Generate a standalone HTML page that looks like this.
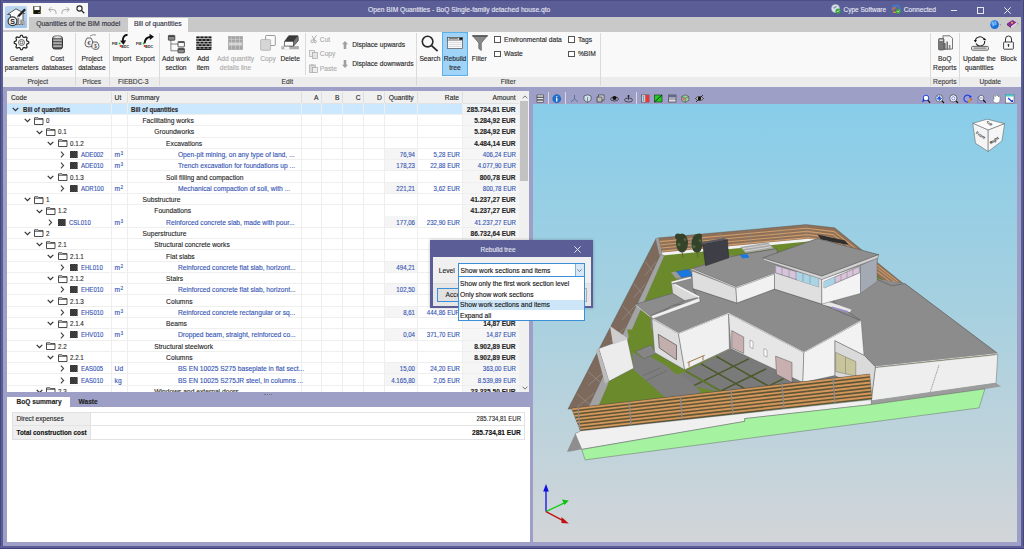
<!DOCTYPE html>
<html><head><meta charset="utf-8">
<style>
*{margin:0;padding:0;box-sizing:border-box}
html,body{width:1024px;height:549px;overflow:hidden}
body{position:relative;background:#9e9fc6;font-family:"Liberation Sans",sans-serif;font-size:6.7px;color:#2b2b2b}
.a{position:absolute}
.t{position:absolute;white-space:nowrap;line-height:1;-webkit-text-stroke:.12px currentColor}
.c{transform:translateX(-50%)}
.r{transform:translateX(-100%)}
svg{position:absolute;overflow:visible}
#title{left:0;top:0;width:1024px;height:17px;background:#5b5e96;border-top:1px solid #4b4e86}
#bl{left:0;top:0;width:3px;height:549px;background:#5b5e96;border-left:1px solid #44477c}
#br{left:1021px;top:0;width:3px;height:549px;background:#5b5e96;border-right:1px solid #44477c}
#bb{left:0;top:546px;width:1024px;height:3px;background:#5b5e96;border-bottom:1px solid #3f4278}
#tabs{left:3px;top:17px;width:1018px;height:14.5px;background:#c9c9c9}
#ribbon{left:3px;top:31.5px;width:1018px;height:55.3px;background:#f9f9f9}
#rlabels{left:3px;top:77.2px;width:1018px;height:9.6px;background:#ececec}
.sep{position:absolute;width:1px;background:#dadada}
.gl{top:77.6px;color:#3a3a3a}
.bl{color:#262626}
.dis{color:#ababab}
.row{position:absolute;left:0;width:512.1px;height:11.28px;border-bottom:1px solid #efefef}
.cell{position:absolute;top:0;height:100%;border-right:1px solid #ececec}
.tx{position:absolute;white-space:nowrap;line-height:1;top:2.6px}
.it{color:#3454b4}
.b{font-weight:bold}
</style></head><body>

<div class="a" id="title"></div>
<div class="a" id="tabs"></div>
<div class="a" id="ribbon"></div>
<div class="a" id="rlabels"></div>
<div class="t c" style="left:459.2px;top:7.0px;color:#e6e7f2">Open BIM Quantities - BoQ Single-family detached house.qto</div>
<svg style="left:831px;top:4px" width="10" height="10" viewBox="0 0 10 10">
<circle cx="4.5" cy="4.5" r="4" fill="#dfe6ee" stroke="#aab4c0" stroke-width=".6"/>
<path d="M2 3.5 Q4 1.5 6.5 2.5 Q5 4 3 5z" fill="#8fa0b0"/>
<circle cx="7" cy="7" r="2.6" fill="#3aa53a"/><path d="M5.8 7 l.9 .9 1.6-1.7" stroke="#fff" stroke-width=".7" fill="none"/></svg>
<div class="t " style="left:843.5px;top:7.4px;color:#e6e7f2;font-size:6.5px">Cype Software</div>
<svg style="left:891px;top:4px" width="10" height="10" viewBox="0 0 10 10">
<path d="M1 6 Q1 1.5 5 1.5 Q9 1.5 9 5.5" stroke="#3d7fd0" stroke-width="1.6" fill="none"/>
<path d="M1.5 6.5 Q3 3 5.5 4" stroke="#e07030" stroke-width="1.3" fill="none"/>
<path d="M2 8 Q5 9 8 7" stroke="#d6b020" stroke-width="1.3" fill="none"/>
<circle cx="7.2" cy="7.3" r="2.5" fill="#3aa53a"/><path d="M6 7.3 l.9 .9 1.6-1.7" stroke="#fff" stroke-width=".7" fill="none"/></svg>
<div class="t " style="left:903.7px;top:7.4px;color:#e6e7f2;font-size:6.7px">Connected</div>
<div class="a" style="left:950.5px;top:10px;width:6.5px;height:1px;background:#e8e8f2"></div>
<div class="a" style="left:977.4px;top:7px;width:6.5px;height:6.5px;border:1px solid #e8e8f2"></div>
<svg style="left:1004px;top:6.8px" width="7" height="7" viewBox="0 0 7 7"><path d="M0.3 .3L6.7 6.7M6.7 .3L.3 6.7" stroke="#eeeef6" stroke-width="1"/></svg>
<div class="a" style="left:3px;top:3px;width:26.3px;height:27px;background:#f4f4f4"></div>
<div class="a" style="left:5.3px;top:5.6px;width:22.2px;height:22.2px;background:linear-gradient(#c0d8f0,#9cc2ea);border-radius:1.5px"></div>
<svg style="left:5px;top:5px" width="22" height="22" viewBox="0 0 22 22">
<path d="M2.5 9.5 L11 3.8 L19.5 8.5 L18 8.5 L18 19.5 L5.5 19.5 L5.5 9.5z" fill="#fbfbfb" stroke="#4a4a4a" stroke-width=".9"/>
<path d="M12.5 10.5 L19.3 3.5 L21 5 L14.2 12z" fill="#222"/><path d="M12.5 10.5 L11.8 12.6 L14.2 12z" fill="#666"/>
<rect x="12.3" y="13" width="2" height="7" fill="#8a8a8a"/><rect x="15.2" y="14.5" width="2" height="5.5" fill="#9a9a9a"/><rect x="18" y="16" width="2" height="4" fill="#aaa"/>
<circle cx="7.5" cy="16.3" r="4.4" fill="#f0f0f0" stroke="#3a3a3a" stroke-width="1.2"/>
<text x="7.5" y="18.8" font-size="7" font-weight="bold" text-anchor="middle" fill="#1a1a1a" font-family="Liberation Sans">S</text></svg>
<div class="a" style="left:29.3px;top:3px;width:58.7px;height:14px;background:#f7f7f7"></div>
<svg style="left:33px;top:5.9px" width="8" height="8.2" viewBox="0 0 8 8.2">
<rect x=".2" y=".2" width="7.6" height="7.8" fill="#2a2a10" /><rect x="1.3" y=".6" width="5.2" height="3.4" fill="#fff"/><rect x=".6" y="4.6" width="6.8" height="3" fill="#111"/><rect x=".4" y="4.3" width=".6" height="3.5" fill="#8a8a20"/><rect x="7" y="4.3" width=".6" height="3.5" fill="#8a8a20"/><rect x="5.6" y="6.2" width="1" height="1" fill="#ccc"/></svg>
<svg style="left:47.5px;top:5.6px" width="9" height="9" viewBox="0 0 9 9"><path d="M3.2 1.2 L.8 3.6 L3.2 6" stroke="#a8a8a8" stroke-width="1" fill="none"/><path d="M1 3.6 H5 Q8 3.6 8 6.3 V8" stroke="#a8a8a8" stroke-width="1" fill="none"/></svg>
<svg style="left:61px;top:5.6px" width="9" height="9" viewBox="0 0 9 9"><path d="M5.8 1.2 L8.2 3.6 L5.8 6" stroke="#a8a8a8" stroke-width="1" fill="none"/><path d="M8 3.6 H4 Q1 3.6 1 6.3 V8" stroke="#a8a8a8" stroke-width="1" fill="none"/></svg>
<svg style="left:76px;top:5.2px" width="9" height="9" viewBox="0 0 9 9"><circle cx="3.5" cy="3.5" r="2.6" stroke="#222" stroke-width="1.1" fill="none"/><path d="M5.4 5.4 L8.3 8.3" stroke="#222" stroke-width="1.3"/></svg>
<div class="t " style="left:36.3px;top:21.1px;color:#2e2e3e;font-size:6.8px">Quantities of the BIM model</div>
<div class="a" style="left:128.1px;top:17.9px;width:59.7px;height:14px;background:#f9f9f9"></div>
<div class="t " style="left:134px;top:21.1px;color:#2e2e3e;font-size:6.8px">Bill of quantities</div>
<svg style="left:990px;top:19.5px" width="12" height="10" viewBox="0 0 12 10">
<circle cx="4.6" cy="4.6" r="4.3" fill="#1a6fd8"/><circle cx="3.6" cy="3.4" r="2.4" fill="#5fb0ff" opacity=".8"/><path d="M2.5 2.5 Q4 4 3 6.5 M5.5 1.2 Q6.5 3 6 5" stroke="#fff" stroke-width=".6" fill="none" opacity=".8"/>
<path d="M10 4.6 l1.2 0 -.6 .8z" fill="#555"/></svg>
<svg style="left:1006px;top:19px" width="14" height="10" viewBox="0 0 14 10">
<path d="M1 4.5 L6.5 1 L10.5 3.5 L5 7.5z" fill="#8a2a9a"/><path d="M1 4.5 L5 7.5 L5 9 L1 6z" fill="#5a1a6a"/><path d="M5 7.5 L10.5 3.5 L10.5 5 L5 9z" fill="#ddd"/><circle cx="6" cy="3.8" r="1" fill="#f0c020"/>
<path d="M11.3 4.6 l1.2 0 -.6 .8z" fill="#555"/></svg>
<div class="sep" style="left:75.2px;top:33px;height:53px"></div>
<div class="sep" style="left:108.6px;top:33px;height:53px"></div>
<div class="sep" style="left:158.6px;top:33px;height:53px"></div>
<div class="sep" style="left:416.4px;top:33px;height:53px"></div>
<div class="sep" style="left:599.5px;top:33px;height:53px"></div>
<div class="sep" style="left:930.3px;top:33px;height:53px"></div>
<div class="sep" style="left:959.3px;top:33px;height:53px"></div>
<div class="sep" style="left:304.5px;top:33px;height:42px"></div>
<div class="t c gl" style="left:37.8px;top:79.1px;">Project</div>
<div class="t c gl" style="left:91.8px;top:79.1px;">Prices</div>
<div class="t c gl" style="left:133.2px;top:79.1px;">FIEBDC-3</div>
<div class="t c gl" style="left:287.3px;top:79.1px;">Edit</div>
<div class="t c gl" style="left:508.2px;top:79.1px;">Filter</div>
<div class="t c gl" style="left:944.8px;top:79.1px;">Reports</div>
<div class="t c gl" style="left:990.3px;top:79.1px;">Update</div>
<div class="t c bl" style="left:21.7px;top:55.9px;">General</div>
<div class="t c bl" style="left:21.7px;top:64.5px;">parameters</div>
<div class="t c bl" style="left:57.2px;top:55.9px;">Cost</div>
<div class="t c bl" style="left:57.2px;top:64.5px;">databases</div>
<div class="t c bl" style="left:91.9px;top:55.9px;">Project</div>
<div class="t c bl" style="left:91.9px;top:64.5px;">database</div>
<div class="t c bl" style="left:121.9px;top:55.9px;">Import</div>
<div class="t c bl" style="left:145.3px;top:55.9px;">Export</div>
<div class="t c bl" style="left:176px;top:55.9px;">Add work</div>
<div class="t c bl" style="left:176px;top:64.5px;">section</div>
<div class="t c bl" style="left:203.1px;top:55.9px;">Add</div>
<div class="t c bl" style="left:203.1px;top:64.5px;">item</div>
<div class="t c dis" style="left:235.5px;top:55.9px;">Add quantity</div>
<div class="t c dis" style="left:235.5px;top:64.5px;">details line</div>
<div class="t c dis" style="left:268px;top:55.9px;">Copy</div>
<div class="t c bl" style="left:290.2px;top:55.9px;">Delete</div>
<div class="a" style="left:442.2px;top:32.3px;width:25.6px;height:43.4px;background:#9fd4f8;border:1px solid #5cb0ea"></div>
<div class="t c bl" style="left:430px;top:55.9px;">Search</div>
<div class="t c bl" style="left:455px;top:55.9px;">Rebuild</div>
<div class="t c bl" style="left:455px;top:64.5px;">tree</div>
<div class="t c bl" style="left:479.3px;top:55.9px;">Filter</div>
<div class="t c bl" style="left:944.8px;top:55.9px;">BoQ</div>
<div class="t c bl" style="left:944.8px;top:64.5px;">Reports</div>
<div class="t c bl" style="left:979.4px;top:55.9px;">Update the</div>
<div class="t c bl" style="left:979.4px;top:64.5px;">quantities</div>
<div class="t c bl" style="left:1008.6px;top:55.9px;">Block</div>
<div class="t dis" style="left:319.8px;top:36.6px;">Cut</div>
<div class="t dis" style="left:319.8px;top:51.2px;">Copy</div>
<div class="t dis" style="left:319.8px;top:65.7px;">Paste</div>
<div class="t bl" style="left:352.2px;top:41.5px;">Displace upwards</div>
<div class="t bl" style="left:352.2px;top:61.1px;">Displace downwards</div>
<div class="a" style="left:494.4px;top:36.2px;width:6.6px;height:6.6px;border:1px solid #555;background:#fff"></div>
<div class="t bl" style="left:504.09999999999997px;top:36.5px;">Environmental data</div>
<div class="a" style="left:494.4px;top:50.9px;width:6.6px;height:6.6px;border:1px solid #555;background:#fff"></div>
<div class="t bl" style="left:504.09999999999997px;top:51.199999999999996px;">Waste</div>
<div class="a" style="left:568.2px;top:36.2px;width:6.6px;height:6.6px;border:1px solid #555;background:#fff"></div>
<div class="t bl" style="left:577.9000000000001px;top:36.5px;">Tags</div>
<div class="a" style="left:568.2px;top:50.9px;width:6.6px;height:6.6px;border:1px solid #555;background:#fff"></div>
<div class="t bl" style="left:577.9000000000001px;top:51.199999999999996px;">%BIM</div>
<svg style="left:14px;top:35px" width="15" height="15" viewBox="0 0 15 15"><polygon points="14.76,6.77 14.77,8.20 12.86,9.12 12.44,10.13 13.15,12.12 12.14,13.13 10.15,12.43 9.14,12.86 8.23,14.76 6.80,14.77 5.88,12.86 4.87,12.44 2.88,13.15 1.87,12.14 2.57,10.15 2.14,9.14 0.24,8.23 0.23,6.80 2.14,5.88 2.56,4.87 1.85,2.88 2.86,1.87 4.85,2.57 5.86,2.14 6.77,0.24 8.20,0.23 9.12,2.14 10.13,2.56 12.12,1.85 13.13,2.86 12.43,4.85 12.86,5.86" fill="#fbfbfb" stroke="#1e1e1e" stroke-width="1.15" stroke-linejoin="round"/><circle cx="7.5" cy="7.5" r="3" fill="none" stroke="#3a3a3a" stroke-width=".8"/><circle cx="7.5" cy="7.5" r="1.4" fill="none" stroke="#444" stroke-width=".7"/></svg>
<svg style="left:52px;top:35px" width="11" height="15" viewBox="0 0 11 15">
<rect x=".5" y="1.5" width="10" height="12.5" rx="2.2" fill="#5a5a5a" stroke="#2a2a2a" stroke-width=".9"/>
<ellipse cx="5.5" cy="2.2" rx="4.6" ry="1.5" fill="#e0e0e0" stroke="#333" stroke-width=".6"/>
<rect x="1.2" y="4.6" width="8.6" height="1" fill="#e8e8e8"/><rect x="1.2" y="7.6" width="8.6" height="1" fill="#e8e8e8"/><rect x="1.2" y="10.6" width="8.6" height="1" fill="#e8e8e8"/></svg>
<svg style="left:83.5px;top:34px" width="16" height="16" viewBox="0 0 16 16">
<path d="M3 4 Q1 7 1 10 Q1 13 5 13 Q9 13 9 10 Q9 7 7 4z" fill="#f6f6f6" stroke="#444" stroke-width=".8"/>
<path d="M6 2 Q9 0 12 1" stroke="#444" stroke-width=".6" fill="none"/>
<text x="5" y="11" font-size="5.5" text-anchor="middle" fill="#333" font-family="Liberation Sans">€</text>
<path d="M9 8 Q7 11 8 13.5 Q9 15.5 12 15.5 Q15 15.5 15 12.5 Q15 10 13 8z" fill="#f0f0f0" stroke="#444" stroke-width=".8"/>
<text x="11.5" y="14" font-size="4.5" text-anchor="middle" fill="#333" font-family="Liberation Sans">$</text></svg>
<svg style="left:112.3px;top:33.8px" width="18" height="14" viewBox="0 0 18 14"><path d="M15.5 .8 Q10 1.5 11 8" stroke="#111" stroke-width="1.9" fill="none"/><path d="M8 6.8 L11.5 10.8 L14.2 6.2z" fill="#111"/>
<text x="0" y="10.6" font-size="4.2" font-weight="bold" fill="#1a1a1a" font-family="Liberation Sans" transform="scale(.85,1)">FIE</text>
<circle cx="7.6" cy="9.5" r="1" fill="#2c2"/><circle cx="8.6" cy="12" r="1" fill="#e22"/>
<text x="11" y="13.6" font-size="4.2" font-weight="bold" fill="#1a1a1a" font-family="Liberation Sans" transform="scale(.85,1)">BDC</text></svg>
<svg style="left:136.0px;top:33.8px" width="18" height="14" viewBox="0 0 18 14"><path d="M8.5 9.5 Q9 3.2 15 2.8" stroke="#111" stroke-width="1.9" fill="none"/><path d="M13.5 -.2 L18 2.8 L13.8 6z" fill="#111"/>
<text x="0" y="10.6" font-size="4.2" font-weight="bold" fill="#1a1a1a" font-family="Liberation Sans" transform="scale(.85,1)">FIE</text>
<circle cx="7.6" cy="9.5" r="1" fill="#2c2"/><circle cx="8.6" cy="12" r="1" fill="#e22"/>
<text x="11" y="13.6" font-size="4.2" font-weight="bold" fill="#1a1a1a" font-family="Liberation Sans" transform="scale(.85,1)">BDC</text></svg>
<svg style="left:167.5px;top:34.5px" width="17" height="17" viewBox="0 0 17 17">
<path d="M2.9 5.2 V9 H10 M2.9 9 V15.8 H10" stroke="#666" stroke-width=".8" fill="none"/>
<rect x=".4" y=".4" width="6.4" height="4.8" rx=".5" fill="#8a8a8a" stroke="#333" stroke-width=".8"/><rect x=".8" y=".8" width="5.6" height="1.2" fill="#444"/>
<rect x="10" y="6.5" width="6.4" height="5.4" rx=".5" fill="#fafafa" stroke="#333" stroke-width=".8"/><rect x="10.4" y="6.9" width="5.6" height="1.1" fill="#555"/>
<rect x="10" y="13.4" width="6.4" height="4.4" rx=".5" fill="#8f8f8f" stroke="#333" stroke-width=".8"/><rect x="10.4" y="13.8" width="5.6" height="1.1" fill="#444"/></svg>
<svg style="left:196px;top:36.4px" width="15.5" height="14" viewBox="0 0 15.5 14"><rect x="0.3" y="0.4" width="3.4" height="2" fill="#1a1a1a"/><rect x="4.3" y="0.4" width="3.4" height="2" fill="#1a1a1a"/><rect x="8.3" y="0.4" width="3.4" height="2" fill="#1a1a1a"/><rect x="12.3" y="0.4" width="3.2" height="2" fill="#1a1a1a"/><rect x="0.3" y="3.0" width="1.4" height="2" fill="#1a1a1a"/><rect x="2.3" y="3.0" width="3.4" height="2" fill="#1a1a1a"/><rect x="6.3" y="3.0" width="3.4" height="2" fill="#1a1a1a"/><rect x="10.3" y="3.0" width="3.4" height="2" fill="#1a1a1a"/><rect x="14.3" y="3.0" width="1.2" height="2" fill="#1a1a1a"/><rect x="0.3" y="5.6" width="3.4" height="2" fill="#1a1a1a"/><rect x="4.3" y="5.6" width="3.4" height="2" fill="#1a1a1a"/><rect x="8.3" y="5.6" width="3.4" height="2" fill="#1a1a1a"/><rect x="12.3" y="5.6" width="3.2" height="2" fill="#1a1a1a"/><rect x="0.3" y="8.2" width="1.4" height="2" fill="#1a1a1a"/><rect x="2.3" y="8.2" width="3.4" height="2" fill="#1a1a1a"/><rect x="6.3" y="8.2" width="3.4" height="2" fill="#1a1a1a"/><rect x="10.3" y="8.2" width="3.4" height="2" fill="#1a1a1a"/><rect x="14.3" y="8.2" width="1.2" height="2" fill="#1a1a1a"/><rect x="0.3" y="10.8" width="3.4" height="2" fill="#1a1a1a"/><rect x="4.3" y="10.8" width="3.4" height="2" fill="#1a1a1a"/><rect x="8.3" y="10.8" width="3.4" height="2" fill="#1a1a1a"/><rect x="12.3" y="10.8" width="3.2" height="2" fill="#1a1a1a"/><rect x=".3" y="13" width="15" height="1" fill="#222"/></svg>
<svg style="left:228px;top:36px" width="15" height="14" viewBox="0 0 15 14">
<rect x=".5" y=".5" width="14" height="13" fill="#a6a6a6" stroke="#999" stroke-width=".6"/>
<path d="M.5 3.5H14.5M.5 6.5H14.5M.5 9.5H14.5M3.5 .5V13.5M7.5 .5V13.5M11.5 .5V13.5" stroke="#d0d0d0" stroke-width=".6"/>
<rect x="1" y="7" width="13" height="2" fill="#eaeaea" opacity=".7"/></svg>
<svg style="left:260px;top:35px" width="16" height="16" viewBox="0 0 16 16">
<rect x="5.6" y=".5" width="9.7" height="10" rx=".8" fill="#fafafa" stroke="#8f8f8f" stroke-width=".9"/>
<rect x=".6" y="4.6" width="10" height="10.7" rx=".8" fill="#d6d6d6" stroke="#a8a8a8" stroke-width=".7"/></svg>
<svg style="left:281px;top:35px" width="19" height="15" viewBox="0 0 19 15">
<path d="M.3 11.1 H17.9 V14.3 H.3z" fill="#ababab"/><path d="M.3 11.1 H3.3 L.3 14.3z" fill="#c8c8c8"/><rect x="3.3" y="11.1" width="5" height="3.2" fill="#f9f9f9"/>
<path d="M7.8 .75 L16.7 .75 L12.5 6.4 L3.6 6.4z" fill="#3a3a3a"/>
<path d="M3.6 6.4 L12.5 6.4 L12.5 11.1 L3.3 11.1z" fill="#fbfbfb"/>
<path d="M12.5 6.4 L16.7 .75 L17.2 2 L17.2 5.8 L12.5 11.1z" fill="#777"/>
<path d="M7.8 .75 L16.7 .75 L17.2 2 L17.2 5.8 L12.5 11.1 L3.3 11.1 L3.6 6.4z M3.6 6.4 L12.5 6.4 L16.7 .75 M12.5 6.4 V11.1" fill="none" stroke="#333" stroke-width=".7" stroke-linejoin="round"/></svg>
<svg style="left:309.5px;top:35px" width="8" height="8" viewBox="0 0 8 8"><path d="M6.5 .3 L3 5 M2 .8 L5 5.5" stroke="#9a9a9a" stroke-width=".8"/><circle cx="2.2" cy="6.3" r="1.4" fill="none" stroke="#a0a0a0" stroke-width=".8"/><circle cx="5.2" cy="6.6" r="1.2" fill="none" stroke="#a0a0a0" stroke-width=".8"/></svg>
<svg style="left:308.5px;top:49.5px" width="9" height="9" viewBox="0 0 9 9"><rect x=".4" y=".4" width="5" height="6" fill="#eee" stroke="#aaa" stroke-width=".7"/><rect x="3.4" y="2.6" width="5" height="6" fill="#e4e4e4" stroke="#a5a5a5" stroke-width=".7"/></svg>
<svg style="left:308.5px;top:64px" width="9" height="9" viewBox="0 0 9 9"><rect x=".4" y="1" width="6" height="7.5" fill="#d9d9d9" stroke="#aaa" stroke-width=".7"/><rect x="2" y=".2" width="2.6" height="1.6" fill="#bbb"/><rect x="3.6" y="3.6" width="5" height="5" fill="#eee" stroke="#a5a5a5" stroke-width=".7"/></svg>
<svg style="left:342.2px;top:40.5px" width="6" height="8" viewBox="0 0 6 8"><path d="M3 0 L6 3.3 L4.3 3.3 L4.3 8 L1.7 8 L1.7 3.3 L0 3.3z" fill="#a0a0a0"/></svg>
<svg style="left:342.2px;top:60px" width="6" height="8" viewBox="0 0 6 8"><path d="M3 8 L6 4.7 L4.3 4.7 L4.3 0 L1.7 0 L1.7 4.7 L0 4.7z" fill="#a0a0a0"/></svg>
<svg style="left:420.5px;top:34.6px" width="18" height="17" viewBox="0 0 18 17"><circle cx="6.6" cy="6.6" r="5.3" stroke="#2a2a2a" stroke-width="1.6" fill="none"/><path d="M10.6 10.6 L16.6 16.2" stroke="#2a2a2a" stroke-width="1.8"/></svg>
<svg style="left:447px;top:36.5px" width="16" height="12" viewBox="0 0 16 12">
<rect x=".5" y=".5" width="15" height="11" fill="#fbfbfb" stroke="#555" stroke-width=".7"/>
<rect x=".5" y=".5" width="15" height="2.6" fill="#e6e6e6" stroke="#444" stroke-width=".6"/>
<rect x="2" y="1.3" width="9" height=".9" fill="#555"/><rect x="12.3" y=".8" width="3" height="2" fill="#111"/>
<path d="M1.5 5.5H14.5M1.5 7.5H14.5M1.5 9.5H14.5" stroke="#bbb" stroke-width=".5"/></svg>
<svg style="left:471.5px;top:35.2px" width="16" height="16" viewBox="0 0 16 16">
<path d="M.5 .6 H15.5 L9.3 8 L9.3 15.5 L6.8 13.5 L6.8 8z" fill="#8a8a8a" stroke="#444" stroke-width=".6"/><rect x=".5" y=".4" width="15" height="1.4" fill="#555"/></svg>
<svg style="left:937.5px;top:35px" width="15" height="16" viewBox="0 0 15 16">
<path d="M5 .8 H12 L14.5 3.3 V14 H5z" fill="#f6f6f6" stroke="#555" stroke-width=".8"/>
<rect x=".5" y="3.5" width="5.5" height="11.5" rx="1" fill="#777" stroke="#444" stroke-width=".6"/><rect x="1.5" y="4.5" width="3.5" height="1.5" fill="#ddd"/>
<rect x="6" y="8" width="1.6" height="7" fill="#666"/><rect x="8.4" y="6.5" width="1.6" height="8.5" fill="#777"/><rect x="10.8" y="10" width="1.6" height="5" fill="#888"/></svg>
<svg style="left:970.5px;top:34.8px" width="18" height="16" viewBox="0 0 18 16">
<path d="M4.5 6 A4.5 4 0 0 1 13 4" stroke="#222" stroke-width="1.1" fill="none"/><path d="M13.5 6 A4.5 4 0 0 1 5 8.5" stroke="#222" stroke-width="1.1" fill="none"/>
<path d="M2.7 5 L6 5.3 L4.4 7.4z" fill="#111"/><path d="M15.3 5.3 L12 5 L13.6 3z" fill="#111"/>
<rect x=".6" y="11.4" width="16.8" height="3.8" rx="1" fill="#eee" stroke="#555" stroke-width=".9"/><rect x="2.5" y="12.6" width="13" height="1" fill="#666"/></svg>
<svg style="left:1003.2px;top:35px" width="11" height="15" viewBox="0 0 11 15">
<path d="M2.5 7 V4 A3 3 0 0 1 8.5 4 V7" stroke="#333" stroke-width="1" fill="none"/>
<rect x=".6" y="7" width="9.8" height="7.2" rx=".8" fill="#fafafa" stroke="#333" stroke-width=".9"/>
<circle cx="5.5" cy="9.9" r=".9" fill="#222"/><rect x="5.1" y="10" width=".8" height="2" fill="#222"/></svg>
<div class="a" style="left:7px;top:91.3px;width:522.2px;height:300.8px;background:#fff;overflow:hidden">
<div class="a" style="left:0;top:0;width:512.1px;height:12.4px;background:#f0f0f0;border-bottom:1px solid #e2e2e2"></div>
<div class="a" style="left:104.3px;top:1px;width:1px;height:10.5px;background:#dedede"></div>
<div class="a" style="left:120.1px;top:1px;width:1px;height:10.5px;background:#dedede"></div>
<div class="a" style="left:293.9px;top:1px;width:1px;height:10.5px;background:#dedede"></div>
<div class="a" style="left:313.9px;top:1px;width:1px;height:10.5px;background:#dedede"></div>
<div class="a" style="left:335.0px;top:1px;width:1px;height:10.5px;background:#dedede"></div>
<div class="a" style="left:356.1px;top:1px;width:1px;height:10.5px;background:#dedede"></div>
<div class="a" style="left:377.3px;top:1px;width:1px;height:10.5px;background:#dedede"></div>
<div class="a" style="left:409.6px;top:1px;width:1px;height:10.5px;background:#dedede"></div>
<div class="a" style="left:455.1px;top:1px;width:1px;height:10.5px;background:#dedede"></div>
<div class="t bl" style="left:4.0px;top:3.8px;">Code</div>
<div class="t bl" style="left:107.6px;top:3.8px;">Ut</div>
<div class="t bl" style="left:123.69999999999999px;top:3.8px;">Summary</div>
<div class="t r bl" style="left:311.4px;top:3.8px;">A</div>
<div class="t r bl" style="left:332.5px;top:3.8px;">B</div>
<div class="t r bl" style="left:353.6px;top:3.8px;">C</div>
<div class="t r bl" style="left:374.8px;top:3.8px;">D</div>
<div class="t bl" style="left:381.8px;top:3.8px;">Quantity</div>
<div class="t r bl" style="left:452.0px;top:3.8px;">Rate</div>
<div class="t r bl" style="left:508.6px;top:3.8px;">Amount</div>
<div class="a" style="left:0;top:12.40px;width:512.1px;height:11.28px;background:#cce8ff"></div>
<div class="a" style="left:455.6px;top:12.40px;width:56.5px;height:11.28px;background:#eef3f8"></div>
<div class="a" style="left:0;top:22.70px;width:512.1px;height:1px;background:#efefef"></div>
<div class="a" style="left:0;top:23.68px;width:512.1px;height:11.28px;background:#fff"></div>
<div class="a" style="left:455.6px;top:23.68px;width:56.5px;height:11.28px;background:#f6f6f6"></div>
<div class="a" style="left:0;top:33.70px;width:512.1px;height:1px;background:#efefef"></div>
<div class="a" style="left:0;top:34.96px;width:512.1px;height:11.28px;background:#fff"></div>
<div class="a" style="left:455.6px;top:34.96px;width:56.5px;height:11.28px;background:#f6f6f6"></div>
<div class="a" style="left:0;top:45.70px;width:512.1px;height:1px;background:#efefef"></div>
<div class="a" style="left:0;top:46.24px;width:512.1px;height:11.28px;background:#fff"></div>
<div class="a" style="left:455.6px;top:46.24px;width:56.5px;height:11.28px;background:#f6f6f6"></div>
<div class="a" style="left:0;top:56.70px;width:512.1px;height:1px;background:#efefef"></div>
<div class="a" style="left:0;top:57.52px;width:512.1px;height:11.28px;background:#fff"></div>
<div class="a" style="left:455.6px;top:57.52px;width:56.5px;height:11.28px;background:#f6f6f6"></div>
<div class="a" style="left:377.8px;top:57.52px;width:32.30000000000001px;height:11.28px;background:#f5f5f5"></div>
<div class="a" style="left:0;top:67.70px;width:512.1px;height:1px;background:#efefef"></div>
<div class="a" style="left:0;top:68.80px;width:512.1px;height:11.28px;background:#fff"></div>
<div class="a" style="left:455.6px;top:68.80px;width:56.5px;height:11.28px;background:#f6f6f6"></div>
<div class="a" style="left:377.8px;top:68.80px;width:32.30000000000001px;height:11.28px;background:#f5f5f5"></div>
<div class="a" style="left:0;top:78.70px;width:512.1px;height:1px;background:#efefef"></div>
<div class="a" style="left:0;top:80.08px;width:512.1px;height:11.28px;background:#fff"></div>
<div class="a" style="left:455.6px;top:80.08px;width:56.5px;height:11.28px;background:#f6f6f6"></div>
<div class="a" style="left:0;top:90.70px;width:512.1px;height:1px;background:#efefef"></div>
<div class="a" style="left:0;top:91.36px;width:512.1px;height:11.28px;background:#fff"></div>
<div class="a" style="left:455.6px;top:91.36px;width:56.5px;height:11.28px;background:#f6f6f6"></div>
<div class="a" style="left:377.8px;top:91.36px;width:32.30000000000001px;height:11.28px;background:#f5f5f5"></div>
<div class="a" style="left:0;top:101.70px;width:512.1px;height:1px;background:#efefef"></div>
<div class="a" style="left:0;top:102.64px;width:512.1px;height:11.28px;background:#fff"></div>
<div class="a" style="left:455.6px;top:102.64px;width:56.5px;height:11.28px;background:#f6f6f6"></div>
<div class="a" style="left:0;top:112.70px;width:512.1px;height:1px;background:#efefef"></div>
<div class="a" style="left:0;top:113.92px;width:512.1px;height:11.28px;background:#fff"></div>
<div class="a" style="left:455.6px;top:113.92px;width:56.5px;height:11.28px;background:#f6f6f6"></div>
<div class="a" style="left:0;top:124.70px;width:512.1px;height:1px;background:#efefef"></div>
<div class="a" style="left:0;top:125.20px;width:512.1px;height:11.28px;background:#fff"></div>
<div class="a" style="left:455.6px;top:125.20px;width:56.5px;height:11.28px;background:#f6f6f6"></div>
<div class="a" style="left:377.8px;top:125.20px;width:32.30000000000001px;height:11.28px;background:#f5f5f5"></div>
<div class="a" style="left:0;top:135.70px;width:512.1px;height:1px;background:#efefef"></div>
<div class="a" style="left:0;top:136.48px;width:512.1px;height:11.28px;background:#fff"></div>
<div class="a" style="left:455.6px;top:136.48px;width:56.5px;height:11.28px;background:#f6f6f6"></div>
<div class="a" style="left:0;top:146.70px;width:512.1px;height:1px;background:#efefef"></div>
<div class="a" style="left:0;top:147.76px;width:512.1px;height:11.28px;background:#fff"></div>
<div class="a" style="left:455.6px;top:147.76px;width:56.5px;height:11.28px;background:#f6f6f6"></div>
<div class="a" style="left:0;top:157.70px;width:512.1px;height:1px;background:#efefef"></div>
<div class="a" style="left:0;top:159.04px;width:512.1px;height:11.28px;background:#fff"></div>
<div class="a" style="left:455.6px;top:159.04px;width:56.5px;height:11.28px;background:#f6f6f6"></div>
<div class="a" style="left:0;top:169.70px;width:512.1px;height:1px;background:#efefef"></div>
<div class="a" style="left:0;top:170.32px;width:512.1px;height:11.28px;background:#fff"></div>
<div class="a" style="left:455.6px;top:170.32px;width:56.5px;height:11.28px;background:#f6f6f6"></div>
<div class="a" style="left:377.8px;top:170.32px;width:32.30000000000001px;height:11.28px;background:#f5f5f5"></div>
<div class="a" style="left:0;top:180.70px;width:512.1px;height:1px;background:#efefef"></div>
<div class="a" style="left:0;top:181.60px;width:512.1px;height:11.28px;background:#fff"></div>
<div class="a" style="left:455.6px;top:181.60px;width:56.5px;height:11.28px;background:#f6f6f6"></div>
<div class="a" style="left:0;top:191.70px;width:512.1px;height:1px;background:#efefef"></div>
<div class="a" style="left:0;top:192.88px;width:512.1px;height:11.28px;background:#fff"></div>
<div class="a" style="left:455.6px;top:192.88px;width:56.5px;height:11.28px;background:#f6f6f6"></div>
<div class="a" style="left:377.8px;top:192.88px;width:32.30000000000001px;height:11.28px;background:#f5f5f5"></div>
<div class="a" style="left:0;top:202.70px;width:512.1px;height:1px;background:#efefef"></div>
<div class="a" style="left:0;top:204.16px;width:512.1px;height:11.28px;background:#fff"></div>
<div class="a" style="left:455.6px;top:204.16px;width:56.5px;height:11.28px;background:#f6f6f6"></div>
<div class="a" style="left:0;top:214.70px;width:512.1px;height:1px;background:#efefef"></div>
<div class="a" style="left:0;top:215.44px;width:512.1px;height:11.28px;background:#fff"></div>
<div class="a" style="left:455.6px;top:215.44px;width:56.5px;height:11.28px;background:#f6f6f6"></div>
<div class="a" style="left:377.8px;top:215.44px;width:32.30000000000001px;height:11.28px;background:#f5f5f5"></div>
<div class="a" style="left:0;top:225.70px;width:512.1px;height:1px;background:#efefef"></div>
<div class="a" style="left:0;top:226.72px;width:512.1px;height:11.28px;background:#fff"></div>
<div class="a" style="left:455.6px;top:226.72px;width:56.5px;height:11.28px;background:#f6f6f6"></div>
<div class="a" style="left:0;top:236.70px;width:512.1px;height:1px;background:#efefef"></div>
<div class="a" style="left:0;top:238.00px;width:512.1px;height:11.28px;background:#fff"></div>
<div class="a" style="left:455.6px;top:238.00px;width:56.5px;height:11.28px;background:#f6f6f6"></div>
<div class="a" style="left:377.8px;top:238.00px;width:32.30000000000001px;height:11.28px;background:#f5f5f5"></div>
<div class="a" style="left:0;top:248.70px;width:512.1px;height:1px;background:#efefef"></div>
<div class="a" style="left:0;top:249.28px;width:512.1px;height:11.28px;background:#fff"></div>
<div class="a" style="left:455.6px;top:249.28px;width:56.5px;height:11.28px;background:#f6f6f6"></div>
<div class="a" style="left:0;top:259.70px;width:512.1px;height:1px;background:#efefef"></div>
<div class="a" style="left:0;top:260.56px;width:512.1px;height:11.28px;background:#fff"></div>
<div class="a" style="left:455.6px;top:260.56px;width:56.5px;height:11.28px;background:#f6f6f6"></div>
<div class="a" style="left:0;top:270.70px;width:512.1px;height:1px;background:#efefef"></div>
<div class="a" style="left:0;top:271.84px;width:512.1px;height:11.28px;background:#fff"></div>
<div class="a" style="left:455.6px;top:271.84px;width:56.5px;height:11.28px;background:#f6f6f6"></div>
<div class="a" style="left:377.8px;top:271.84px;width:32.30000000000001px;height:11.28px;background:#f5f5f5"></div>
<div class="a" style="left:0;top:281.70px;width:512.1px;height:1px;background:#efefef"></div>
<div class="a" style="left:0;top:283.12px;width:512.1px;height:11.28px;background:#fff"></div>
<div class="a" style="left:455.6px;top:283.12px;width:56.5px;height:11.28px;background:#f6f6f6"></div>
<div class="a" style="left:377.8px;top:283.12px;width:32.30000000000001px;height:11.28px;background:#f5f5f5"></div>
<div class="a" style="left:0;top:293.70px;width:512.1px;height:1px;background:#efefef"></div>
<div class="a" style="left:0;top:294.40px;width:512.1px;height:11.28px;background:#fff"></div>
<div class="a" style="left:455.6px;top:294.40px;width:56.5px;height:11.28px;background:#f6f6f6"></div>
<div class="a" style="left:0;top:304.70px;width:512.1px;height:1px;background:#efefef"></div>
<div class="a" style="left:104.3px;top:12.1px;width:.8px;height:300px;background:#eeeeee"></div>
<div class="a" style="left:120.1px;top:12.1px;width:.8px;height:300px;background:#eeeeee"></div>
<div class="a" style="left:293.9px;top:12.1px;width:.8px;height:300px;background:#eeeeee"></div>
<div class="a" style="left:313.9px;top:12.1px;width:.8px;height:300px;background:#eeeeee"></div>
<div class="a" style="left:335.0px;top:12.1px;width:.8px;height:300px;background:#eeeeee"></div>
<div class="a" style="left:356.1px;top:12.1px;width:.8px;height:300px;background:#eeeeee"></div>
<div class="a" style="left:377.3px;top:12.1px;width:.8px;height:300px;background:#eeeeee"></div>
<div class="a" style="left:409.6px;top:12.1px;width:.8px;height:300px;background:#eeeeee"></div>
<div class="a" style="left:455.1px;top:12.1px;width:.8px;height:300px;background:#eeeeee"></div>
<svg style="left:4.8999999999999995px;top:15.800000000000006px" width="7" height="5" viewBox="0 0 7 5"><path d="M.7 .9 L3.5 3.7 L6.3 .9" stroke="#333" stroke-width="1.25" fill="none"/></svg>
<div class="t b bl" style="left:15.7px;top:15.600000000000005px;font-size:6.6px;transform:scaleX(.92);transform-origin:0 50%">Bill of quantities</div>
<div class="t b bl" style="left:123.69999999999999px;top:15.600000000000005px;font-size:6.6px;transform:scaleX(.92);transform-origin:0 50%">Bill of quantities</div>
<div class="t r b bl" style="left:508.6px;top:15.600000000000005px;font-size:6.6px">285.734,81 EUR</div>
<svg style="left:16.7px;top:27.080000000000005px" width="7" height="5" viewBox="0 0 7 5"><path d="M.7 .9 L3.5 3.7 L6.3 .9" stroke="#333" stroke-width="1.25" fill="none"/></svg>
<svg style="left:27.2px;top:25.380000000000006px" width="9.5" height="8" viewBox="0 0 9.5 8"><path d="M.5 .8 H4 L4.6 1.6 H9 V7.5 H.5z" fill="#fff" stroke="#3a3a3a" stroke-width=".9"/><path d="M.5 2.3 H9" stroke="#3a3a3a" stroke-width=".8"/></svg>
<div class="t bl" style="left:39.099999999999994px;top:26.880000000000006px;transform:scaleX(.93);transform-origin:0 50%">0</div>
<div class="t bl" style="left:135.5px;top:26.880000000000006px;">Facilitating works</div>
<div class="t r b bl" style="left:508.6px;top:26.880000000000006px;font-size:6.6px">5.284,92 EUR</div>
<svg style="left:28.500000000000004px;top:38.36000000000001px" width="7" height="5" viewBox="0 0 7 5"><path d="M.7 .9 L3.5 3.7 L6.3 .9" stroke="#333" stroke-width="1.25" fill="none"/></svg>
<svg style="left:39.0px;top:36.66000000000001px" width="9.5" height="8" viewBox="0 0 9.5 8"><path d="M.5 .8 H4 L4.6 1.6 H9 V7.5 H.5z" fill="#fff" stroke="#3a3a3a" stroke-width=".9"/><path d="M.5 2.3 H9" stroke="#3a3a3a" stroke-width=".8"/></svg>
<div class="t bl" style="left:50.900000000000006px;top:38.16000000000001px;transform:scaleX(.93);transform-origin:0 50%">0.1</div>
<div class="t bl" style="left:147.29999999999998px;top:38.16000000000001px;">Groundworks</div>
<div class="t r b bl" style="left:508.6px;top:38.16000000000001px;font-size:6.6px">5.284,92 EUR</div>
<svg style="left:40.300000000000004px;top:49.63999999999999px" width="7" height="5" viewBox="0 0 7 5"><path d="M.7 .9 L3.5 3.7 L6.3 .9" stroke="#333" stroke-width="1.25" fill="none"/></svg>
<svg style="left:50.80000000000001px;top:47.94px" width="9.5" height="8" viewBox="0 0 9.5 8"><path d="M.5 .8 H4 L4.6 1.6 H9 V7.5 H.5z" fill="#fff" stroke="#3a3a3a" stroke-width=".9"/><path d="M.5 2.3 H9" stroke="#3a3a3a" stroke-width=".8"/></svg>
<div class="t bl" style="left:62.7px;top:49.44px;transform:scaleX(.93);transform-origin:0 50%">0.1.2</div>
<div class="t bl" style="left:159.1px;top:49.44px;">Excavations</div>
<div class="t r b bl" style="left:508.6px;top:49.44px;font-size:6.6px">4.484,14 EUR</div>
<svg style="left:52.6px;top:59.81999999999999px" width="5" height="7" viewBox="0 0 5 7"><path d="M.9 .7 L3.6 3.5 L.9 6.3" stroke="#444" stroke-width="1.1" fill="none"/></svg>
<svg style="left:63.2px;top:59.72px" width="7.5" height="7" viewBox="0 0 7.5 7"><rect x="0" y="0" width="7.5" height="7" fill="#262626"/><rect x="0.00" y="0.00" width="1.25" height="1.17" fill="#555"/><rect x="0.00" y="2.34" width="1.25" height="1.17" fill="#555"/><rect x="0.00" y="4.68" width="1.25" height="1.17" fill="#555"/><rect x="1.25" y="1.17" width="1.25" height="1.17" fill="#555"/><rect x="1.25" y="3.51" width="1.25" height="1.17" fill="#555"/><rect x="1.25" y="5.85" width="1.25" height="1.17" fill="#555"/><rect x="2.50" y="0.00" width="1.25" height="1.17" fill="#555"/><rect x="2.50" y="2.34" width="1.25" height="1.17" fill="#555"/><rect x="2.50" y="4.68" width="1.25" height="1.17" fill="#555"/><rect x="3.75" y="1.17" width="1.25" height="1.17" fill="#555"/><rect x="3.75" y="3.51" width="1.25" height="1.17" fill="#555"/><rect x="3.75" y="5.85" width="1.25" height="1.17" fill="#555"/><rect x="5.00" y="0.00" width="1.25" height="1.17" fill="#555"/><rect x="5.00" y="2.34" width="1.25" height="1.17" fill="#555"/><rect x="5.00" y="4.68" width="1.25" height="1.17" fill="#555"/><rect x="6.25" y="1.17" width="1.25" height="1.17" fill="#555"/><rect x="6.25" y="3.51" width="1.25" height="1.17" fill="#555"/><rect x="6.25" y="5.85" width="1.25" height="1.17" fill="#555"/></svg>
<div class="t it" style="left:74.0px;top:60.72px;transform:scaleX(.9);transform-origin:0 50%">ADE002</div>
<div class="t it" style="left:107.6px;top:60.72px;">m<span style="font-size:4.6px;position:relative;top:-2.2px;margin-left:.4px">3</span></div>
<div class="t it" style="left:170.89999999999998px;top:60.72px;">Open-pit mining, on any type of land, ...</div>
<div class="t it" style="left:408.3px;top:60.72px;transform:translateX(-100%) scaleX(.91);transform-origin:100% 50%">76,94</div>
<div class="t it" style="left:452.8px;top:60.72px;transform:translateX(-100%) scaleX(.91);transform-origin:100% 50%">5,28 EUR</div>
<div class="t it" style="left:508.6px;top:60.72px;transform:translateX(-100%) scaleX(.91);transform-origin:100% 50%">406,24 EUR</div>
<svg style="left:52.6px;top:71.1px" width="5" height="7" viewBox="0 0 5 7"><path d="M.9 .7 L3.6 3.5 L.9 6.3" stroke="#444" stroke-width="1.1" fill="none"/></svg>
<svg style="left:63.2px;top:71.0px" width="7.5" height="7" viewBox="0 0 7.5 7"><rect x="0" y="0" width="7.5" height="7" fill="#262626"/><rect x="0.00" y="0.00" width="1.25" height="1.17" fill="#555"/><rect x="0.00" y="2.34" width="1.25" height="1.17" fill="#555"/><rect x="0.00" y="4.68" width="1.25" height="1.17" fill="#555"/><rect x="1.25" y="1.17" width="1.25" height="1.17" fill="#555"/><rect x="1.25" y="3.51" width="1.25" height="1.17" fill="#555"/><rect x="1.25" y="5.85" width="1.25" height="1.17" fill="#555"/><rect x="2.50" y="0.00" width="1.25" height="1.17" fill="#555"/><rect x="2.50" y="2.34" width="1.25" height="1.17" fill="#555"/><rect x="2.50" y="4.68" width="1.25" height="1.17" fill="#555"/><rect x="3.75" y="1.17" width="1.25" height="1.17" fill="#555"/><rect x="3.75" y="3.51" width="1.25" height="1.17" fill="#555"/><rect x="3.75" y="5.85" width="1.25" height="1.17" fill="#555"/><rect x="5.00" y="0.00" width="1.25" height="1.17" fill="#555"/><rect x="5.00" y="2.34" width="1.25" height="1.17" fill="#555"/><rect x="5.00" y="4.68" width="1.25" height="1.17" fill="#555"/><rect x="6.25" y="1.17" width="1.25" height="1.17" fill="#555"/><rect x="6.25" y="3.51" width="1.25" height="1.17" fill="#555"/><rect x="6.25" y="5.85" width="1.25" height="1.17" fill="#555"/></svg>
<div class="t it" style="left:74.0px;top:72.0px;transform:scaleX(.9);transform-origin:0 50%">ADE010</div>
<div class="t it" style="left:107.6px;top:72.0px;">m<span style="font-size:4.6px;position:relative;top:-2.2px;margin-left:.4px">3</span></div>
<div class="t it" style="left:170.89999999999998px;top:72.0px;">Trench excavation for foundations up ...</div>
<div class="t it" style="left:408.3px;top:72.0px;transform:translateX(-100%) scaleX(.91);transform-origin:100% 50%">178,23</div>
<div class="t it" style="left:452.8px;top:72.0px;transform:translateX(-100%) scaleX(.91);transform-origin:100% 50%">22,88 EUR</div>
<div class="t it" style="left:508.6px;top:72.0px;transform:translateX(-100%) scaleX(.91);transform-origin:100% 50%">4.077,90 EUR</div>
<svg style="left:40.300000000000004px;top:83.48px" width="7" height="5" viewBox="0 0 7 5"><path d="M.7 .9 L3.5 3.7 L6.3 .9" stroke="#333" stroke-width="1.25" fill="none"/></svg>
<svg style="left:50.80000000000001px;top:81.78px" width="9.5" height="8" viewBox="0 0 9.5 8"><path d="M.5 .8 H4 L4.6 1.6 H9 V7.5 H.5z" fill="#fff" stroke="#3a3a3a" stroke-width=".9"/><path d="M.5 2.3 H9" stroke="#3a3a3a" stroke-width=".8"/></svg>
<div class="t bl" style="left:62.7px;top:83.28px;transform:scaleX(.93);transform-origin:0 50%">0.1.3</div>
<div class="t bl" style="left:159.1px;top:83.28px;">Soil filling and compaction</div>
<div class="t r b bl" style="left:508.6px;top:83.28px;font-size:6.6px">800,78 EUR</div>
<svg style="left:52.6px;top:93.66px" width="5" height="7" viewBox="0 0 5 7"><path d="M.9 .7 L3.6 3.5 L.9 6.3" stroke="#444" stroke-width="1.1" fill="none"/></svg>
<svg style="left:63.2px;top:93.56px" width="7.5" height="7" viewBox="0 0 7.5 7"><rect x="0" y="0" width="7.5" height="7" fill="#262626"/><rect x="0.00" y="0.00" width="1.25" height="1.17" fill="#555"/><rect x="0.00" y="2.34" width="1.25" height="1.17" fill="#555"/><rect x="0.00" y="4.68" width="1.25" height="1.17" fill="#555"/><rect x="1.25" y="1.17" width="1.25" height="1.17" fill="#555"/><rect x="1.25" y="3.51" width="1.25" height="1.17" fill="#555"/><rect x="1.25" y="5.85" width="1.25" height="1.17" fill="#555"/><rect x="2.50" y="0.00" width="1.25" height="1.17" fill="#555"/><rect x="2.50" y="2.34" width="1.25" height="1.17" fill="#555"/><rect x="2.50" y="4.68" width="1.25" height="1.17" fill="#555"/><rect x="3.75" y="1.17" width="1.25" height="1.17" fill="#555"/><rect x="3.75" y="3.51" width="1.25" height="1.17" fill="#555"/><rect x="3.75" y="5.85" width="1.25" height="1.17" fill="#555"/><rect x="5.00" y="0.00" width="1.25" height="1.17" fill="#555"/><rect x="5.00" y="2.34" width="1.25" height="1.17" fill="#555"/><rect x="5.00" y="4.68" width="1.25" height="1.17" fill="#555"/><rect x="6.25" y="1.17" width="1.25" height="1.17" fill="#555"/><rect x="6.25" y="3.51" width="1.25" height="1.17" fill="#555"/><rect x="6.25" y="5.85" width="1.25" height="1.17" fill="#555"/></svg>
<div class="t it" style="left:74.0px;top:94.56px;transform:scaleX(.9);transform-origin:0 50%">ADR100</div>
<div class="t it" style="left:107.6px;top:94.56px;">m<span style="font-size:4.6px;position:relative;top:-2.2px;margin-left:.4px">2</span></div>
<div class="t it" style="left:170.89999999999998px;top:94.56px;">Mechanical compaction of soil, with ...</div>
<div class="t it" style="left:408.3px;top:94.56px;transform:translateX(-100%) scaleX(.91);transform-origin:100% 50%">221,21</div>
<div class="t it" style="left:452.8px;top:94.56px;transform:translateX(-100%) scaleX(.91);transform-origin:100% 50%">3,62 EUR</div>
<div class="t it" style="left:508.6px;top:94.56px;transform:translateX(-100%) scaleX(.91);transform-origin:100% 50%">800,78 EUR</div>
<svg style="left:16.7px;top:106.04px" width="7" height="5" viewBox="0 0 7 5"><path d="M.7 .9 L3.5 3.7 L6.3 .9" stroke="#333" stroke-width="1.25" fill="none"/></svg>
<svg style="left:27.2px;top:104.34px" width="9.5" height="8" viewBox="0 0 9.5 8"><path d="M.5 .8 H4 L4.6 1.6 H9 V7.5 H.5z" fill="#fff" stroke="#3a3a3a" stroke-width=".9"/><path d="M.5 2.3 H9" stroke="#3a3a3a" stroke-width=".8"/></svg>
<div class="t bl" style="left:39.099999999999994px;top:105.84px;transform:scaleX(.93);transform-origin:0 50%">1</div>
<div class="t bl" style="left:135.5px;top:105.84px;">Substructure</div>
<div class="t r b bl" style="left:508.6px;top:105.84px;font-size:6.6px">41.237,27 EUR</div>
<svg style="left:28.500000000000004px;top:117.32000000000001px" width="7" height="5" viewBox="0 0 7 5"><path d="M.7 .9 L3.5 3.7 L6.3 .9" stroke="#333" stroke-width="1.25" fill="none"/></svg>
<svg style="left:39.0px;top:115.62px" width="9.5" height="8" viewBox="0 0 9.5 8"><path d="M.5 .8 H4 L4.6 1.6 H9 V7.5 H.5z" fill="#fff" stroke="#3a3a3a" stroke-width=".9"/><path d="M.5 2.3 H9" stroke="#3a3a3a" stroke-width=".8"/></svg>
<div class="t bl" style="left:50.900000000000006px;top:117.12px;transform:scaleX(.93);transform-origin:0 50%">1.2</div>
<div class="t bl" style="left:147.29999999999998px;top:117.12px;">Foundations</div>
<div class="t r b bl" style="left:508.6px;top:117.12px;font-size:6.6px">41.237,27 EUR</div>
<svg style="left:40.800000000000004px;top:127.5px" width="5" height="7" viewBox="0 0 5 7"><path d="M.9 .7 L3.6 3.5 L.9 6.3" stroke="#444" stroke-width="1.1" fill="none"/></svg>
<svg style="left:51.400000000000006px;top:127.4px" width="7.5" height="7" viewBox="0 0 7.5 7"><rect x="0" y="0" width="7.5" height="7" fill="#262626"/><rect x="0.00" y="0.00" width="1.25" height="1.17" fill="#555"/><rect x="0.00" y="2.34" width="1.25" height="1.17" fill="#555"/><rect x="0.00" y="4.68" width="1.25" height="1.17" fill="#555"/><rect x="1.25" y="1.17" width="1.25" height="1.17" fill="#555"/><rect x="1.25" y="3.51" width="1.25" height="1.17" fill="#555"/><rect x="1.25" y="5.85" width="1.25" height="1.17" fill="#555"/><rect x="2.50" y="0.00" width="1.25" height="1.17" fill="#555"/><rect x="2.50" y="2.34" width="1.25" height="1.17" fill="#555"/><rect x="2.50" y="4.68" width="1.25" height="1.17" fill="#555"/><rect x="3.75" y="1.17" width="1.25" height="1.17" fill="#555"/><rect x="3.75" y="3.51" width="1.25" height="1.17" fill="#555"/><rect x="3.75" y="5.85" width="1.25" height="1.17" fill="#555"/><rect x="5.00" y="0.00" width="1.25" height="1.17" fill="#555"/><rect x="5.00" y="2.34" width="1.25" height="1.17" fill="#555"/><rect x="5.00" y="4.68" width="1.25" height="1.17" fill="#555"/><rect x="6.25" y="1.17" width="1.25" height="1.17" fill="#555"/><rect x="6.25" y="3.51" width="1.25" height="1.17" fill="#555"/><rect x="6.25" y="5.85" width="1.25" height="1.17" fill="#555"/></svg>
<div class="t it" style="left:62.2px;top:128.4px;transform:scaleX(.9);transform-origin:0 50%">CSL010</div>
<div class="t it" style="left:107.6px;top:128.4px;">m<span style="font-size:4.6px;position:relative;top:-2.2px;margin-left:.4px">3</span></div>
<div class="t it" style="left:159.1px;top:128.4px;">Reinforced concrete slab, made with pour...</div>
<div class="t it" style="left:408.3px;top:128.4px;transform:translateX(-100%) scaleX(.91);transform-origin:100% 50%">177,06</div>
<div class="t it" style="left:452.8px;top:128.4px;transform:translateX(-100%) scaleX(.91);transform-origin:100% 50%">232,90 EUR</div>
<div class="t it" style="left:508.6px;top:128.4px;transform:translateX(-100%) scaleX(.91);transform-origin:100% 50%">41.237,27 EUR</div>
<svg style="left:16.7px;top:139.88000000000002px" width="7" height="5" viewBox="0 0 7 5"><path d="M.7 .9 L3.5 3.7 L6.3 .9" stroke="#333" stroke-width="1.25" fill="none"/></svg>
<svg style="left:27.2px;top:138.18px" width="9.5" height="8" viewBox="0 0 9.5 8"><path d="M.5 .8 H4 L4.6 1.6 H9 V7.5 H.5z" fill="#fff" stroke="#3a3a3a" stroke-width=".9"/><path d="M.5 2.3 H9" stroke="#3a3a3a" stroke-width=".8"/></svg>
<div class="t bl" style="left:39.099999999999994px;top:139.68px;transform:scaleX(.93);transform-origin:0 50%">2</div>
<div class="t bl" style="left:135.5px;top:139.68px;">Superstructure</div>
<div class="t r b bl" style="left:508.6px;top:139.68px;font-size:6.6px">86.732,64 EUR</div>
<svg style="left:28.500000000000004px;top:151.16px" width="7" height="5" viewBox="0 0 7 5"><path d="M.7 .9 L3.5 3.7 L6.3 .9" stroke="#333" stroke-width="1.25" fill="none"/></svg>
<svg style="left:39.0px;top:149.45999999999998px" width="9.5" height="8" viewBox="0 0 9.5 8"><path d="M.5 .8 H4 L4.6 1.6 H9 V7.5 H.5z" fill="#fff" stroke="#3a3a3a" stroke-width=".9"/><path d="M.5 2.3 H9" stroke="#3a3a3a" stroke-width=".8"/></svg>
<div class="t bl" style="left:50.900000000000006px;top:150.95999999999998px;transform:scaleX(.93);transform-origin:0 50%">2.1</div>
<div class="t bl" style="left:147.29999999999998px;top:150.95999999999998px;">Structural concrete works</div>
<div class="t r b bl" style="left:508.6px;top:150.95999999999998px;font-size:6.6px">77.829,75 EUR</div>
<svg style="left:40.300000000000004px;top:162.43999999999997px" width="7" height="5" viewBox="0 0 7 5"><path d="M.7 .9 L3.5 3.7 L6.3 .9" stroke="#333" stroke-width="1.25" fill="none"/></svg>
<svg style="left:50.80000000000001px;top:160.73999999999995px" width="9.5" height="8" viewBox="0 0 9.5 8"><path d="M.5 .8 H4 L4.6 1.6 H9 V7.5 H.5z" fill="#fff" stroke="#3a3a3a" stroke-width=".9"/><path d="M.5 2.3 H9" stroke="#3a3a3a" stroke-width=".8"/></svg>
<div class="t bl" style="left:62.7px;top:162.23999999999995px;transform:scaleX(.93);transform-origin:0 50%">2.1.1</div>
<div class="t bl" style="left:159.1px;top:162.23999999999995px;">Flat slabs</div>
<div class="t r b bl" style="left:508.6px;top:162.23999999999995px;font-size:6.6px">60.524,36 EUR</div>
<svg style="left:52.6px;top:172.62px" width="5" height="7" viewBox="0 0 5 7"><path d="M.9 .7 L3.6 3.5 L.9 6.3" stroke="#444" stroke-width="1.1" fill="none"/></svg>
<svg style="left:63.2px;top:172.51999999999998px" width="7.5" height="7" viewBox="0 0 7.5 7"><rect x="0" y="0" width="7.5" height="7" fill="#262626"/><rect x="0.00" y="0.00" width="1.25" height="1.17" fill="#555"/><rect x="0.00" y="2.34" width="1.25" height="1.17" fill="#555"/><rect x="0.00" y="4.68" width="1.25" height="1.17" fill="#555"/><rect x="1.25" y="1.17" width="1.25" height="1.17" fill="#555"/><rect x="1.25" y="3.51" width="1.25" height="1.17" fill="#555"/><rect x="1.25" y="5.85" width="1.25" height="1.17" fill="#555"/><rect x="2.50" y="0.00" width="1.25" height="1.17" fill="#555"/><rect x="2.50" y="2.34" width="1.25" height="1.17" fill="#555"/><rect x="2.50" y="4.68" width="1.25" height="1.17" fill="#555"/><rect x="3.75" y="1.17" width="1.25" height="1.17" fill="#555"/><rect x="3.75" y="3.51" width="1.25" height="1.17" fill="#555"/><rect x="3.75" y="5.85" width="1.25" height="1.17" fill="#555"/><rect x="5.00" y="0.00" width="1.25" height="1.17" fill="#555"/><rect x="5.00" y="2.34" width="1.25" height="1.17" fill="#555"/><rect x="5.00" y="4.68" width="1.25" height="1.17" fill="#555"/><rect x="6.25" y="1.17" width="1.25" height="1.17" fill="#555"/><rect x="6.25" y="3.51" width="1.25" height="1.17" fill="#555"/><rect x="6.25" y="5.85" width="1.25" height="1.17" fill="#555"/></svg>
<div class="t it" style="left:74.0px;top:173.51999999999998px;transform:scaleX(.9);transform-origin:0 50%">EHL010</div>
<div class="t it" style="left:107.6px;top:173.51999999999998px;">m<span style="font-size:4.6px;position:relative;top:-2.2px;margin-left:.4px">2</span></div>
<div class="t it" style="left:170.89999999999998px;top:173.51999999999998px;">Reinforced concrete flat slab, horizont...</div>
<div class="t it" style="left:408.3px;top:173.51999999999998px;transform:translateX(-100%) scaleX(.91);transform-origin:100% 50%">494,21</div>
<div class="t it" style="left:452.8px;top:173.51999999999998px;transform:translateX(-100%) scaleX(.91);transform-origin:100% 50%">9,47 EUR</div>
<div class="t it" style="left:508.6px;top:173.51999999999998px;transform:translateX(-100%) scaleX(.91);transform-origin:100% 50%">60.524,36 EUR</div>
<svg style="left:40.300000000000004px;top:184.99999999999997px" width="7" height="5" viewBox="0 0 7 5"><path d="M.7 .9 L3.5 3.7 L6.3 .9" stroke="#333" stroke-width="1.25" fill="none"/></svg>
<svg style="left:50.80000000000001px;top:183.29999999999995px" width="9.5" height="8" viewBox="0 0 9.5 8"><path d="M.5 .8 H4 L4.6 1.6 H9 V7.5 H.5z" fill="#fff" stroke="#3a3a3a" stroke-width=".9"/><path d="M.5 2.3 H9" stroke="#3a3a3a" stroke-width=".8"/></svg>
<div class="t bl" style="left:62.7px;top:184.79999999999995px;transform:scaleX(.93);transform-origin:0 50%">2.1.2</div>
<div class="t bl" style="left:159.1px;top:184.79999999999995px;">Stairs</div>
<div class="t r b bl" style="left:508.6px;top:184.79999999999995px;font-size:6.6px">13.460,04 EUR</div>
<svg style="left:52.6px;top:195.18px" width="5" height="7" viewBox="0 0 5 7"><path d="M.9 .7 L3.6 3.5 L.9 6.3" stroke="#444" stroke-width="1.1" fill="none"/></svg>
<svg style="left:63.2px;top:195.07999999999998px" width="7.5" height="7" viewBox="0 0 7.5 7"><rect x="0" y="0" width="7.5" height="7" fill="#262626"/><rect x="0.00" y="0.00" width="1.25" height="1.17" fill="#555"/><rect x="0.00" y="2.34" width="1.25" height="1.17" fill="#555"/><rect x="0.00" y="4.68" width="1.25" height="1.17" fill="#555"/><rect x="1.25" y="1.17" width="1.25" height="1.17" fill="#555"/><rect x="1.25" y="3.51" width="1.25" height="1.17" fill="#555"/><rect x="1.25" y="5.85" width="1.25" height="1.17" fill="#555"/><rect x="2.50" y="0.00" width="1.25" height="1.17" fill="#555"/><rect x="2.50" y="2.34" width="1.25" height="1.17" fill="#555"/><rect x="2.50" y="4.68" width="1.25" height="1.17" fill="#555"/><rect x="3.75" y="1.17" width="1.25" height="1.17" fill="#555"/><rect x="3.75" y="3.51" width="1.25" height="1.17" fill="#555"/><rect x="3.75" y="5.85" width="1.25" height="1.17" fill="#555"/><rect x="5.00" y="0.00" width="1.25" height="1.17" fill="#555"/><rect x="5.00" y="2.34" width="1.25" height="1.17" fill="#555"/><rect x="5.00" y="4.68" width="1.25" height="1.17" fill="#555"/><rect x="6.25" y="1.17" width="1.25" height="1.17" fill="#555"/><rect x="6.25" y="3.51" width="1.25" height="1.17" fill="#555"/><rect x="6.25" y="5.85" width="1.25" height="1.17" fill="#555"/></svg>
<div class="t it" style="left:74.0px;top:196.07999999999998px;transform:scaleX(.9);transform-origin:0 50%">EHE010</div>
<div class="t it" style="left:107.6px;top:196.07999999999998px;">m<span style="font-size:4.6px;position:relative;top:-2.2px;margin-left:.4px">2</span></div>
<div class="t it" style="left:170.89999999999998px;top:196.07999999999998px;">Reinforced concrete flat slab, horizont...</div>
<div class="t it" style="left:408.3px;top:196.07999999999998px;transform:translateX(-100%) scaleX(.91);transform-origin:100% 50%">102,50</div>
<div class="t it" style="left:452.8px;top:196.07999999999998px;transform:translateX(-100%) scaleX(.91);transform-origin:100% 50%">9,32 EUR</div>
<div class="t it" style="left:508.6px;top:196.07999999999998px;transform:translateX(-100%) scaleX(.91);transform-origin:100% 50%">13.460,04 EUR</div>
<svg style="left:40.300000000000004px;top:207.55999999999997px" width="7" height="5" viewBox="0 0 7 5"><path d="M.7 .9 L3.5 3.7 L6.3 .9" stroke="#333" stroke-width="1.25" fill="none"/></svg>
<svg style="left:50.80000000000001px;top:205.85999999999996px" width="9.5" height="8" viewBox="0 0 9.5 8"><path d="M.5 .8 H4 L4.6 1.6 H9 V7.5 H.5z" fill="#fff" stroke="#3a3a3a" stroke-width=".9"/><path d="M.5 2.3 H9" stroke="#3a3a3a" stroke-width=".8"/></svg>
<div class="t bl" style="left:62.7px;top:207.35999999999996px;transform:scaleX(.93);transform-origin:0 50%">2.1.3</div>
<div class="t bl" style="left:159.1px;top:207.35999999999996px;">Columns</div>
<div class="t r b bl" style="left:508.6px;top:207.35999999999996px;font-size:6.6px">3.830,24 EUR</div>
<svg style="left:52.6px;top:217.74px" width="5" height="7" viewBox="0 0 5 7"><path d="M.9 .7 L3.6 3.5 L.9 6.3" stroke="#444" stroke-width="1.1" fill="none"/></svg>
<svg style="left:63.2px;top:217.64px" width="7.5" height="7" viewBox="0 0 7.5 7"><rect x="0" y="0" width="7.5" height="7" fill="#262626"/><rect x="0.00" y="0.00" width="1.25" height="1.17" fill="#555"/><rect x="0.00" y="2.34" width="1.25" height="1.17" fill="#555"/><rect x="0.00" y="4.68" width="1.25" height="1.17" fill="#555"/><rect x="1.25" y="1.17" width="1.25" height="1.17" fill="#555"/><rect x="1.25" y="3.51" width="1.25" height="1.17" fill="#555"/><rect x="1.25" y="5.85" width="1.25" height="1.17" fill="#555"/><rect x="2.50" y="0.00" width="1.25" height="1.17" fill="#555"/><rect x="2.50" y="2.34" width="1.25" height="1.17" fill="#555"/><rect x="2.50" y="4.68" width="1.25" height="1.17" fill="#555"/><rect x="3.75" y="1.17" width="1.25" height="1.17" fill="#555"/><rect x="3.75" y="3.51" width="1.25" height="1.17" fill="#555"/><rect x="3.75" y="5.85" width="1.25" height="1.17" fill="#555"/><rect x="5.00" y="0.00" width="1.25" height="1.17" fill="#555"/><rect x="5.00" y="2.34" width="1.25" height="1.17" fill="#555"/><rect x="5.00" y="4.68" width="1.25" height="1.17" fill="#555"/><rect x="6.25" y="1.17" width="1.25" height="1.17" fill="#555"/><rect x="6.25" y="3.51" width="1.25" height="1.17" fill="#555"/><rect x="6.25" y="5.85" width="1.25" height="1.17" fill="#555"/></svg>
<div class="t it" style="left:74.0px;top:218.64px;transform:scaleX(.9);transform-origin:0 50%">EHS010</div>
<div class="t it" style="left:107.6px;top:218.64px;">m<span style="font-size:4.6px;position:relative;top:-2.2px;margin-left:.4px">3</span></div>
<div class="t it" style="left:170.89999999999998px;top:218.64px;">Reinforced concrete rectangular or sq...</div>
<div class="t it" style="left:408.3px;top:218.64px;transform:translateX(-100%) scaleX(.91);transform-origin:100% 50%">8,61</div>
<div class="t it" style="left:452.8px;top:218.64px;transform:translateX(-100%) scaleX(.91);transform-origin:100% 50%">444,86 EUR</div>
<div class="t it" style="left:508.6px;top:218.64px;transform:translateX(-100%) scaleX(.91);transform-origin:100% 50%">3.830,24 EUR</div>
<svg style="left:40.300000000000004px;top:230.11999999999998px" width="7" height="5" viewBox="0 0 7 5"><path d="M.7 .9 L3.5 3.7 L6.3 .9" stroke="#333" stroke-width="1.25" fill="none"/></svg>
<svg style="left:50.80000000000001px;top:228.41999999999996px" width="9.5" height="8" viewBox="0 0 9.5 8"><path d="M.5 .8 H4 L4.6 1.6 H9 V7.5 H.5z" fill="#fff" stroke="#3a3a3a" stroke-width=".9"/><path d="M.5 2.3 H9" stroke="#3a3a3a" stroke-width=".8"/></svg>
<div class="t bl" style="left:62.7px;top:229.91999999999996px;transform:scaleX(.93);transform-origin:0 50%">2.1.4</div>
<div class="t bl" style="left:159.1px;top:229.91999999999996px;">Beams</div>
<div class="t r b bl" style="left:508.6px;top:229.91999999999996px;font-size:6.6px">14,87 EUR</div>
<svg style="left:52.6px;top:240.3px" width="5" height="7" viewBox="0 0 5 7"><path d="M.9 .7 L3.6 3.5 L.9 6.3" stroke="#444" stroke-width="1.1" fill="none"/></svg>
<svg style="left:63.2px;top:240.2px" width="7.5" height="7" viewBox="0 0 7.5 7"><rect x="0" y="0" width="7.5" height="7" fill="#262626"/><rect x="0.00" y="0.00" width="1.25" height="1.17" fill="#555"/><rect x="0.00" y="2.34" width="1.25" height="1.17" fill="#555"/><rect x="0.00" y="4.68" width="1.25" height="1.17" fill="#555"/><rect x="1.25" y="1.17" width="1.25" height="1.17" fill="#555"/><rect x="1.25" y="3.51" width="1.25" height="1.17" fill="#555"/><rect x="1.25" y="5.85" width="1.25" height="1.17" fill="#555"/><rect x="2.50" y="0.00" width="1.25" height="1.17" fill="#555"/><rect x="2.50" y="2.34" width="1.25" height="1.17" fill="#555"/><rect x="2.50" y="4.68" width="1.25" height="1.17" fill="#555"/><rect x="3.75" y="1.17" width="1.25" height="1.17" fill="#555"/><rect x="3.75" y="3.51" width="1.25" height="1.17" fill="#555"/><rect x="3.75" y="5.85" width="1.25" height="1.17" fill="#555"/><rect x="5.00" y="0.00" width="1.25" height="1.17" fill="#555"/><rect x="5.00" y="2.34" width="1.25" height="1.17" fill="#555"/><rect x="5.00" y="4.68" width="1.25" height="1.17" fill="#555"/><rect x="6.25" y="1.17" width="1.25" height="1.17" fill="#555"/><rect x="6.25" y="3.51" width="1.25" height="1.17" fill="#555"/><rect x="6.25" y="5.85" width="1.25" height="1.17" fill="#555"/></svg>
<div class="t it" style="left:74.0px;top:241.2px;transform:scaleX(.9);transform-origin:0 50%">EHV010</div>
<div class="t it" style="left:107.6px;top:241.2px;">m<span style="font-size:4.6px;position:relative;top:-2.2px;margin-left:.4px">3</span></div>
<div class="t it" style="left:170.89999999999998px;top:241.2px;">Dropped beam, straight, reinforced co...</div>
<div class="t it" style="left:408.3px;top:241.2px;transform:translateX(-100%) scaleX(.91);transform-origin:100% 50%">0,04</div>
<div class="t it" style="left:452.8px;top:241.2px;transform:translateX(-100%) scaleX(.91);transform-origin:100% 50%">371,70 EUR</div>
<div class="t it" style="left:508.6px;top:241.2px;transform:translateX(-100%) scaleX(.91);transform-origin:100% 50%">14,87 EUR</div>
<svg style="left:28.500000000000004px;top:252.67999999999998px" width="7" height="5" viewBox="0 0 7 5"><path d="M.7 .9 L3.5 3.7 L6.3 .9" stroke="#333" stroke-width="1.25" fill="none"/></svg>
<svg style="left:39.0px;top:250.97999999999996px" width="9.5" height="8" viewBox="0 0 9.5 8"><path d="M.5 .8 H4 L4.6 1.6 H9 V7.5 H.5z" fill="#fff" stroke="#3a3a3a" stroke-width=".9"/><path d="M.5 2.3 H9" stroke="#3a3a3a" stroke-width=".8"/></svg>
<div class="t bl" style="left:50.900000000000006px;top:252.47999999999996px;transform:scaleX(.93);transform-origin:0 50%">2.2</div>
<div class="t bl" style="left:147.29999999999998px;top:252.47999999999996px;">Structural steelwork</div>
<div class="t r b bl" style="left:508.6px;top:252.47999999999996px;font-size:6.6px">8.902,89 EUR</div>
<svg style="left:40.300000000000004px;top:263.96px" width="7" height="5" viewBox="0 0 7 5"><path d="M.7 .9 L3.5 3.7 L6.3 .9" stroke="#333" stroke-width="1.25" fill="none"/></svg>
<svg style="left:50.80000000000001px;top:262.26px" width="9.5" height="8" viewBox="0 0 9.5 8"><path d="M.5 .8 H4 L4.6 1.6 H9 V7.5 H.5z" fill="#fff" stroke="#3a3a3a" stroke-width=".9"/><path d="M.5 2.3 H9" stroke="#3a3a3a" stroke-width=".8"/></svg>
<div class="t bl" style="left:62.7px;top:263.76px;transform:scaleX(.93);transform-origin:0 50%">2.2.1</div>
<div class="t bl" style="left:159.1px;top:263.76px;">Columns</div>
<div class="t r b bl" style="left:508.6px;top:263.76px;font-size:6.6px">8.902,89 EUR</div>
<svg style="left:52.6px;top:274.14px" width="5" height="7" viewBox="0 0 5 7"><path d="M.9 .7 L3.6 3.5 L.9 6.3" stroke="#444" stroke-width="1.1" fill="none"/></svg>
<svg style="left:63.2px;top:274.03999999999996px" width="7.5" height="7" viewBox="0 0 7.5 7"><rect x="0" y="0" width="7.5" height="7" fill="#262626"/><rect x="0.00" y="0.00" width="1.25" height="1.17" fill="#555"/><rect x="0.00" y="2.34" width="1.25" height="1.17" fill="#555"/><rect x="0.00" y="4.68" width="1.25" height="1.17" fill="#555"/><rect x="1.25" y="1.17" width="1.25" height="1.17" fill="#555"/><rect x="1.25" y="3.51" width="1.25" height="1.17" fill="#555"/><rect x="1.25" y="5.85" width="1.25" height="1.17" fill="#555"/><rect x="2.50" y="0.00" width="1.25" height="1.17" fill="#555"/><rect x="2.50" y="2.34" width="1.25" height="1.17" fill="#555"/><rect x="2.50" y="4.68" width="1.25" height="1.17" fill="#555"/><rect x="3.75" y="1.17" width="1.25" height="1.17" fill="#555"/><rect x="3.75" y="3.51" width="1.25" height="1.17" fill="#555"/><rect x="3.75" y="5.85" width="1.25" height="1.17" fill="#555"/><rect x="5.00" y="0.00" width="1.25" height="1.17" fill="#555"/><rect x="5.00" y="2.34" width="1.25" height="1.17" fill="#555"/><rect x="5.00" y="4.68" width="1.25" height="1.17" fill="#555"/><rect x="6.25" y="1.17" width="1.25" height="1.17" fill="#555"/><rect x="6.25" y="3.51" width="1.25" height="1.17" fill="#555"/><rect x="6.25" y="5.85" width="1.25" height="1.17" fill="#555"/></svg>
<div class="t it" style="left:74.0px;top:275.03999999999996px;transform:scaleX(.9);transform-origin:0 50%">EAS005</div>
<div class="t it" style="left:107.6px;top:275.03999999999996px;">Ud</div>
<div class="t it" style="left:170.89999999999998px;top:275.03999999999996px;">BS EN 10025 S275 baseplate in flat sect...</div>
<div class="t it" style="left:408.3px;top:275.03999999999996px;transform:translateX(-100%) scaleX(.91);transform-origin:100% 50%">15,00</div>
<div class="t it" style="left:452.8px;top:275.03999999999996px;transform:translateX(-100%) scaleX(.91);transform-origin:100% 50%">24,20 EUR</div>
<div class="t it" style="left:508.6px;top:275.03999999999996px;transform:translateX(-100%) scaleX(.91);transform-origin:100% 50%">363,00 EUR</div>
<svg style="left:52.6px;top:285.41999999999996px" width="5" height="7" viewBox="0 0 5 7"><path d="M.9 .7 L3.6 3.5 L.9 6.3" stroke="#444" stroke-width="1.1" fill="none"/></svg>
<svg style="left:63.2px;top:285.31999999999994px" width="7.5" height="7" viewBox="0 0 7.5 7"><rect x="0" y="0" width="7.5" height="7" fill="#262626"/><rect x="0.00" y="0.00" width="1.25" height="1.17" fill="#555"/><rect x="0.00" y="2.34" width="1.25" height="1.17" fill="#555"/><rect x="0.00" y="4.68" width="1.25" height="1.17" fill="#555"/><rect x="1.25" y="1.17" width="1.25" height="1.17" fill="#555"/><rect x="1.25" y="3.51" width="1.25" height="1.17" fill="#555"/><rect x="1.25" y="5.85" width="1.25" height="1.17" fill="#555"/><rect x="2.50" y="0.00" width="1.25" height="1.17" fill="#555"/><rect x="2.50" y="2.34" width="1.25" height="1.17" fill="#555"/><rect x="2.50" y="4.68" width="1.25" height="1.17" fill="#555"/><rect x="3.75" y="1.17" width="1.25" height="1.17" fill="#555"/><rect x="3.75" y="3.51" width="1.25" height="1.17" fill="#555"/><rect x="3.75" y="5.85" width="1.25" height="1.17" fill="#555"/><rect x="5.00" y="0.00" width="1.25" height="1.17" fill="#555"/><rect x="5.00" y="2.34" width="1.25" height="1.17" fill="#555"/><rect x="5.00" y="4.68" width="1.25" height="1.17" fill="#555"/><rect x="6.25" y="1.17" width="1.25" height="1.17" fill="#555"/><rect x="6.25" y="3.51" width="1.25" height="1.17" fill="#555"/><rect x="6.25" y="5.85" width="1.25" height="1.17" fill="#555"/></svg>
<div class="t it" style="left:74.0px;top:286.31999999999994px;transform:scaleX(.9);transform-origin:0 50%">EAS010</div>
<div class="t it" style="left:107.6px;top:286.31999999999994px;">kg</div>
<div class="t it" style="left:170.89999999999998px;top:286.31999999999994px;">BS EN 10025 S275JR steel, in columns ...</div>
<div class="t it" style="left:408.3px;top:286.31999999999994px;transform:translateX(-100%) scaleX(.91);transform-origin:100% 50%">4.165,80</div>
<div class="t it" style="left:452.8px;top:286.31999999999994px;transform:translateX(-100%) scaleX(.91);transform-origin:100% 50%">2,05 EUR</div>
<div class="t it" style="left:508.6px;top:286.31999999999994px;transform:translateX(-100%) scaleX(.91);transform-origin:100% 50%">8.539,89 EUR</div>
<svg style="left:28.500000000000004px;top:297.79999999999995px" width="7" height="5" viewBox="0 0 7 5"><path d="M.7 .9 L3.5 3.7 L6.3 .9" stroke="#333" stroke-width="1.25" fill="none"/></svg>
<svg style="left:39.0px;top:296.09999999999997px" width="9.5" height="8" viewBox="0 0 9.5 8"><path d="M.5 .8 H4 L4.6 1.6 H9 V7.5 H.5z" fill="#fff" stroke="#3a3a3a" stroke-width=".9"/><path d="M.5 2.3 H9" stroke="#3a3a3a" stroke-width=".8"/></svg>
<div class="t bl" style="left:50.900000000000006px;top:297.59999999999997px;transform:scaleX(.93);transform-origin:0 50%">2.3</div>
<div class="t bl" style="left:147.29999999999998px;top:297.59999999999997px;">Windows and external doors</div>
<div class="t r b bl" style="left:508.6px;top:297.59999999999997px;font-size:6.6px">23.335,50 EUR</div>
<div class="a" style="left:512.1px;top:0;width:10.100000000000023px;height:300.8px;background:#f0f0f0"></div>
<div class="a" style="left:513.4px;top:9.900000000000006px;width:7.5px;height:79.39999999999999px;background:#c2c2c2"></div>
<svg style="left:514.5px;top:4px" width="6" height="4" viewBox="0 0 6 4"><path d="M.6 3.3 L3 .9 L5.4 3.3" stroke="#555" stroke-width=".8" fill="none"/></svg>
<svg style="left:514.5px;top:294.7px" width="6" height="4" viewBox="0 0 6 4"><path d="M.6 .7 L3 3.1 L5.4 .7" stroke="#555" stroke-width=".8" fill="none"/></svg>
</div>
<div class="a" style="left:264px;top:394px;width:8px;height:1px;border-top:1px dotted #777"></div>
<div class="a" style="left:7px;top:406.8px;width:522.6px;height:135px;background:#fff"></div>
<div class="a" style="left:7px;top:397.2px;width:62.5px;height:10px;background:#fff"></div>
<div class="t b bl" style="left:16.5px;top:398.9px;font-size:6.6px;color:#222">BoQ summary</div>
<div class="t b bl" style="left:78.5px;top:398.9px;font-size:6.6px;color:#222">Waste</div>
<div class="a" style="left:12.2px;top:411.6px;width:513px;height:28.6px;border:1px solid #e3e3e3;background:#fff"></div>
<div class="a" style="left:12.2px;top:411.6px;width:78.5px;height:28.6px;background:#efefef;border:1px solid #e0e0e0"></div>
<div class="a" style="left:12.2px;top:425.3px;width:513px;height:1px;background:#e3e3e3"></div>
<div class="t bl" style="left:16.5px;top:416.3px;font-size:6.6px">Direct expenses</div>
<div class="t b bl" style="left:16.5px;top:430.2px;font-size:6.4px;color:#111">Total construction cost</div>
<div class="t bl" style="left:520.8px;top:416.3px;font-size:6.6px;transform:translateX(-100%) scaleX(.91);transform-origin:100% 50%">285.734,81 EUR</div>
<div class="t r b bl" style="left:520.8px;top:430.2px;font-size:6.6px;color:#111">285.734,81 EUR</div>
<div class="a" style="left:533px;top:104.4px;width:484px;height:437.6px;background:linear-gradient(#88cde9 0%,#a5d0e0 45%,#d2d5d8 100%);overflow:hidden">
<svg style="left:0;top:0" width="484" height="437" viewBox="533 104.4 484 437">
<polygon points="659.7,255 808,241 834,243 902,283 997,354 871,401 580,431 592,404" fill="#6a8a2b" />
<polygon points="657,238.5 806,225 834.7,228.2 902.5,283.3 891,286 828.7,242.8 808.2,241.5 662.5,255.1" fill="#8e7058" stroke="#505050" stroke-width="0.4" stroke-linejoin="round" />
<path d="M660 242 L806 228.6 L834 232 L898 282 M660.7 245.2 L806.5 231.8 L833 235 L896 283 M661.4 248.4 L807 235 L832 238 L893 284 M662 251.5 L808 238 L830 241" stroke="#cf9c6c" stroke-width="1.1" fill="none"/>
<path d="M690 236 L691 252 M720 233.5 L721 249.5 M750 230.8 L751 246.8 M780 228 L781 244 M806 225 L807 241" stroke="#8a8a8a" stroke-width=".7"/>
<polygon points="661.5,252.8 808,239.2 829,241 829,243.6 808,241.8 662.5,256" fill="#f2f2f2" />
<polygon points="656.1,239 660.5,255 588,409 568,409.5" fill="#7e6a5c" stroke="#505050" stroke-width="0.4" stroke-linejoin="round" />
<polygon points="655.5,238.5 658.5,238.2 662.5,255.5 659.5,256" fill="#9c9c9c" />
<path d="M645.1 262.0 L656.2 276.0 M645.1 276.0 L656.2 262.0 M633.7 284.0 L645.8 298.0 M633.7 298.0 L645.8 284.0 M622.3 306.0 L635.4 320.0 M622.3 320.0 L635.4 306.0 M610.8 328.0 L625.0 342.0 M610.8 342.0 L625.0 328.0 M599.4 350.0 L614.7 364.0 M599.4 364.0 L614.7 350.0 M587.9 372.0 L604.3 386.0 M587.9 386.0 L604.3 372.0 M576.5 394.0 L593.9 408.0 M576.5 408.0 L593.9 394.0" stroke="#a0a0a0" stroke-width=".6" fill="none" opacity=".8"/>
<polygon points="660.5,255 664.5,256 598,408 588,409" fill="#a3a3a3" stroke="#666" stroke-width="0.3" stroke-linejoin="round" />
<g fill="#34432a"><ellipse cx="682" cy="243.5" rx="6" ry="9.5"/><ellipse cx="697" cy="244" rx="5.5" ry="9.5"/><circle cx="678" cy="237" r="3"/><circle cx="699" cy="237" r="3"/></g>
<g fill="#5d7046" opacity=".8"><circle cx="679" cy="245" r="1.6"/><circle cx="685" cy="240" r="1.4"/><circle cx="694" cy="247" r="1.5"/><circle cx="700" cy="241" r="1.3"/></g>
<path d="M682 252 L683 258 M697 252 L698 258" stroke="#6a5a40" stroke-width=".9"/>
<polygon points="740,247.5 768,243 774,249 746,253.5" fill="#a9a9a9" />
<path d="M743 249 L769 245 M744.5 251.5 L771 247.3" stroke="#ddd" stroke-width=".8"/>
<polygon points="650.1,316.4 636,304.6 672.9,293.7 671.5,283.7 691.8,269 731,256 763,258 817.5,239 878.8,255.1 874.3,278.6 904.9,284 997.8,354 875.4,367.1 805,384 731,350 684.7,370.2 654.7,352.9" fill="#8b8b8b" />
<polygon points="676,272 689,269.5 692.5,276.5 681,278" fill="#1b78e0" stroke="#555" stroke-width="0.4" stroke-linejoin="round" />
<polygon points="671,273 676,272 681,278 676,279" fill="#9a9a9a" />
<polygon points="817.5,235 845,241 848.7,245.4 821,240" fill="#2e2e2e" />
<polygon points="832.8,301.5 874.3,278.6 891.8,286.2 904.9,284 997.8,354 875.4,367.1 864,355.6 834.8,341 861.2,321.2" fill="#8c8c8c" stroke="#505050" stroke-width="0.5" stroke-linejoin="round" />
<path d="M875.4 367.1 L997.8 354" stroke="#cfcfcf" stroke-width="1" fill="none"/>
<polygon points="875.4,368 997.8,355 996,383.5 871.2,401.2" fill="#eeeeee" stroke="#505050" stroke-width="0.4" stroke-linejoin="round" />
<path d="M939 365.5 L929.6 394.5" stroke="#777" stroke-width=".7" stroke-dasharray="1.2 .6"/>
<polygon points="834.8,341 864,355.6 875.4,367.1 871.2,401.2 834.8,376" fill="#dadada" stroke="#505050" stroke-width="0.4" stroke-linejoin="round" />
<polygon points="835.7,352.8 855.8,362 855.8,376.5 835.7,372" fill="#c8c49c" stroke="#555" stroke-width="0.4" stroke-linejoin="round" />
<path d="M845.5 357.5 V374" stroke="#666" stroke-width=".4"/>
<polygon points="867.6,402 996,383.5 1001,387 867.6,407.1" fill="#9c9c9c" />
<polygon points="731.4,349.4 802.9,382.9 834.8,376 871,390 760,402 667.56,380.48 685.8,371.6" fill="#7a7a7a" />
<path d="M716.2 356.8 L789.28 398.38 M701.0 364.2 L774.08 405.78 M685.8 371.6 L758.88 413.18 M748.8 359.3 L680.4 392.6 M766.2 369.2 L697.8 402.5 M783.6 379.1 L715.2 412.4" stroke="#4b5828" stroke-width="1.5" fill="none"/>
<path d="M685.8 371.6 L764.1 416.15" stroke="#5d7a2a" stroke-width="1.8" fill="none"/>
<polygon points="627.1,330 652.6,330 654.1,344.6 635.2,351.9 632.2,350.4" fill="#6a8a2b" />
<polygon points="632.2,352.6 643.9,359.1 649.7,357 680.3,373.7 700,391 700,400 665.8,398.5 633.7,370.1" fill="#7e7e7e" />
<path d="M643 376 L660 368.5 M646 381 L667 371" stroke="#5e5e5e" stroke-width=".5"/>
<polygon points="635.2,351.9 651.2,345.3 656.3,354 643.9,359.1" fill="#858585" stroke="#555" stroke-width="0.4" stroke-linejoin="round" />
<polygon points="654.1,355.5 657.7,354.8 680.3,373.7 676.7,375.2" fill="#6a8a2b" />
<polygon points="608.9,381.7 633.7,370.8 664.3,398.5 601.7,405.8" fill="#6a8a2b" />
<polygon points="598.7,348.9 627.1,338.7 633.7,368.6 608.9,381.7" fill="#ececec" stroke="#505050" stroke-width="0.4" stroke-linejoin="round" />
<polygon points="596,350.5 598.7,348.9 608.9,381.7 605,384" fill="#bcbcbc" />
<polygon points="610,326.5 627.3,338.3 627.3,340 613,345" fill="#cdcdcd" />
<polygon points="651.9,319.2 678.4,333.8 684.7,370.2 654.7,352.9" fill="#dedede" stroke="#505050" stroke-width="0.4" stroke-linejoin="round" />
<polygon points="658.3,334.7 676.5,345.6 676.5,360.2 659.2,348.3" fill="#c3aeae" stroke="#3a3a3a" stroke-width="0.6" stroke-linejoin="round" />
<polygon points="678.4,333.8 728.5,313.7 729.4,349.2 684.7,370.2" fill="#f0f0f0" stroke="#505050" stroke-width="0.4" stroke-linejoin="round" />
<path d="M687.5 363 L704.8 355.6 M689 362.5 L689 367 M703 356.5 L703 361" stroke="#a07850" stroke-width="1" fill="none"/>
<polygon points="728.5,313.7 803.8,352.8 802.9,382.9 731,349.2" fill="#e6e6e6" stroke="#505050" stroke-width="0.4" stroke-linejoin="round" />
<polygon points="731.8,331 743.7,337.4 743.7,353.8 731.8,348.3" fill="#c8b0b0" stroke="#555" stroke-width="0.5" stroke-linejoin="round" />
<polygon points="775.6,356.5 792,362.9 792,382.9 776.5,374.7" fill="#c8b0b0" stroke="#555" stroke-width="0.5" stroke-linejoin="round" />
<polygon points="750,340.5 753,342 753,349 750,347.5" fill="#fff" stroke="#555" stroke-width="0.4" stroke-linejoin="round" />
<polygon points="764,349 767,350.5 767,357.5 764,356" fill="#fff" stroke="#555" stroke-width="0.4" stroke-linejoin="round" />
<polygon points="803.8,352.8 861.2,321.5 864,355.6 834.8,341 834.8,376 802.9,382.9" fill="#f2f2f2" stroke="#505050" stroke-width="0.4" stroke-linejoin="round" />
<polygon points="635.5,304.6 672.9,293.7 684.7,301 650.1,316.4" fill="#8c8c8c" stroke="#505050" stroke-width="0.4" stroke-linejoin="round" />
<polygon points="635.5,304.6 650.1,316.4 650.5,318 636,306.5" fill="#c4c4c4" />
<polygon points="652.8,319.2 672,306 700.2,301.9 692.9,289 736.9,303.4 774.5,289.5 821.8,304.5 861.2,321.2 803.8,352.8 728.5,313.7 678.4,333.8" fill="#8c8c8c" stroke="#505050" stroke-width="0.5" stroke-linejoin="round" />
<path d="M652.8 319.2 L678.4 333.8 L728.5 313.7 L803.8 352.8 L861.2 321.2" stroke="#d4d4d4" stroke-width="1.1" fill="none"/>
<polygon points="651,316.4 699.3,298.2 700.2,301.9 652.8,319.2" fill="#f0f0f0" stroke="#505050" stroke-width="0.3" stroke-linejoin="round" />
<polygon points="671.5,283.7 674.6,284.6 699.2,297.5 684.7,301 672.8,293.7" fill="#d9d9d9" stroke="#505050" stroke-width="0.3" stroke-linejoin="round" />
<path d="M671.5 283 L691 277.9 M674.6 284.8 L699.2 297.6" stroke="#f4f4f4" stroke-width="1.6" fill="none"/>
<polygon points="821.8,300 838,305 852,310 850,313 821.8,305" fill="#e8e8e8" stroke="#505050" stroke-width="0.3" stroke-linejoin="round" />
<polygon points="832,307 848,311.5 848,313.5 832,309" fill="#9a8fc0" />
<polygon points="691.8,271.2 735.9,288.4 736.9,303.4 692.9,289" fill="#dedede" stroke="#505050" stroke-width="0.4" stroke-linejoin="round" />
<polygon points="735.9,288.4 774.5,274.4 774.5,289.5 736.9,303.4" fill="#f1f1f1" stroke="#505050" stroke-width="0.4" stroke-linejoin="round" />
<polygon points="691.8,269 705,265 728.8,257.5 746,254 777,249 778,272.5 735.9,287.3" fill="#8e8e8e" stroke="#505050" stroke-width="0.5" stroke-linejoin="round" />
<polygon points="740,255.5 747,254.3 749.5,257.8 742.5,259" fill="#1b78e0" />
<path d="M691.8 269.5 L735.9 287.8 L778 272.8" stroke="#cfcfcf" stroke-width="1" fill="none"/>
<polygon points="702.6,244.4 727.4,240 728.8,258.2 705.5,266.2" fill="#3e3e46" stroke="#222" stroke-width="0.4" stroke-linejoin="round" />
<polygon points="702.6,244.4 727.4,240 724,238.5 700,242.8" fill="#5a5a62" />
<polygon points="774.5,264.8 821.8,279.8 821.8,304.5 774.5,289.5" fill="#dfdfdf" stroke="#505050" stroke-width="0.4" stroke-linejoin="round" />
<polygon points="775.6,265.8 818.6,278.7 818.6,287.3 775.6,273.3" fill="#d6c4dc" stroke="#555" stroke-width="0.5" stroke-linejoin="round" />
<polygon points="797,272.2 818.6,278.7 818.6,287.3 797,280.3" fill="#a9d4e6" />
<path d="M782 268 V275.5 M789 270 V277.5 M796 272.5 V280 M803 274.5 V282 M810 276.5 V284" stroke="#666" stroke-width=".4"/>
<polygon points="821.8,279.8 860.5,265.8 860.5,293.8 821.8,304.5" fill="#f3f3f3" stroke="#505050" stroke-width="0.4" stroke-linejoin="round" />
<polygon points="824,282 859.4,266.9 859.4,273.3 824,288.4" fill="#d9c4dc" stroke="#555" stroke-width="0.5" stroke-linejoin="round" />
<polygon points="824,282 835,277.3 835,283.7 824,288.4" fill="#a9d4e6" />
<path d="M835 277.3 V283.7 M841 274.7 V281 M847 272.2 V278.6 M853 269.6 V276" stroke="#666" stroke-width=".4"/>
<polygon points="860.5,265.8 877,258.5 877,282 860.5,293.8" fill="#a4aab4" stroke="#666" stroke-width="0.4" stroke-linejoin="round" />
<polygon points="762.7,258.3 817.5,239 878.8,255.1 821.8,276.6" fill="#8e8e8e" stroke="#505050" stroke-width="0.5" stroke-linejoin="round" />
<polygon points="762.7,258.3 821.8,276.6 878.8,255.1 877.7,258.3 821.8,279.8 763.8,260.5" fill="#d2d2d2" stroke="#505050" stroke-width="0.3" stroke-linejoin="round" />
<polygon points="571.4,408.6 869.7,374.4 872,399.5 580.5,431.3" fill="#5e5634" stroke="#505050" stroke-width="0.4" stroke-linejoin="round" />
<polygon points="571.5,408.86 869.73,374.69 869.9,376.62 572.21,410.61" fill="#d4965c" />
<polygon points="572.8,412.1 870.05,378.27 870.23,380.21 573.51,413.85" fill="#d4965c" />
<polygon points="574.1,415.35 870.38,381.86 870.56,383.79 574.81,417.1" fill="#d4965c" />
<polygon points="575.4,418.59 870.71,385.44 870.89,387.38 576.11,420.34" fill="#d4965c" />
<polygon points="576.7,421.83 871.04,389.03 871.22,390.97 577.41,423.58" fill="#d4965c" />
<polygon points="578.0,425.07 871.37,392.62 871.55,394.55 578.71,426.82" fill="#d4965c" />
<polygon points="579.3,428.32 871.7,396.2 871.88,398.14 580.01,430.07" fill="#d4965c" />
<path d="M578 407.8 L580 430.6 M629 402.0 L631 425.2 M680.2 396.1 L682.2 419.7 M731 390.3 L733 414.3 M782 384.5 L784 408.8 M833 378.6 L835 403.4" stroke="#8a8a8a" stroke-width="1.3" fill="none"/>
<polygon points="575.2,434.1 580.5,431.3 871.2,400 871.2,405 744.7,419 744.7,421.8 581.8,449.7" fill="#f0f0f0" stroke="#505050" stroke-width="0.4" stroke-linejoin="round" />
<polygon points="581.8,449.9 744.7,421.8 744.7,419 871.2,405 984.9,389.3 979,408.3 585.1,460.3" fill="#a5f2a0" stroke="#505050" stroke-width="0.4" stroke-linejoin="round" />
<polygon points="567,452.1 575.2,434.1 581.8,449.7 570,452" fill="#8e8e8e" />
<polygon points="987.3,119.6 1004.6,124.1 988.2,130.5 972.75,123.7" fill="#fafafa" stroke="#555" stroke-width="0.5" stroke-linejoin="round" />
<polygon points="972.75,123.7 988.2,130.5 988.2,151.9 975.5,143.7" fill="#f4f4f4" stroke="#555" stroke-width="0.5" stroke-linejoin="round" />
<polygon points="988.2,130.5 1004.6,124.1 1001.9,141.4 988.2,151.9" fill="#f6f6f6" stroke="#555" stroke-width="0.5" stroke-linejoin="round" />
<text x="0" y="0" font-size="4" font-weight="bold" font-family="Liberation Sans" fill="#222" transform="translate(975.5,134) rotate(33)">Front</text>
<text x="0" y="0" font-size="4" font-weight="bold" font-family="Liberation Sans" fill="#222" transform="translate(991,145) rotate(-38)">Right</text>
<text x="0" y="0" font-size="3.6" font-weight="bold" font-family="Liberation Sans" fill="#222" transform="translate(986,123.5) rotate(25)">Top</text>
<path d="M546 512 V490" stroke="#1010e0" stroke-width="1.3"/><path d="M543.2 492 L546 484.5 L548.8 492z" fill="#1010e0"/>
<path d="M546 512 L565 503" stroke="#10d010" stroke-width="1.3"/><path d="M562 500 L568.8 501 L564.5 505.5z" fill="#10c010"/>
<path d="M546 512 L564 521.5" stroke="#c01010" stroke-width="1.3"/><path d="M561.5 517.5 L568.8 523.8 L561.5 523.5z" fill="#c01010"/>
</svg></div>
<div class="a" style="left:548.4px;top:92px;width:1px;height:12px;background:#d8d8ea"></div>
<div class="a" style="left:565.4px;top:92px;width:1px;height:12px;background:#d8d8ea"></div>
<div class="a" style="left:636.3px;top:92px;width:1px;height:12px;background:#d8d8ea"></div>
<svg style="left:535.5px;top:93.8px" width="9" height="9" viewBox="0 0 9 9"><rect x="1" y="1" width="6.5" height="2" fill="#eee" stroke="#333" stroke-width=".6"/><rect x="1" y="3.6" width="6.5" height="2" fill="#eee" stroke="#333" stroke-width=".6"/><rect x="1" y="6.2" width="6.5" height="2" fill="#eee" stroke="#333" stroke-width=".6"/></svg>
<svg style="left:552.3px;top:93.8px" width="9.5" height="9.5" viewBox="0 0 9.5 9.5"><circle cx="4.75" cy="4.75" r="4.4" fill="#1f6fc8"/><rect x="4.1" y="4" width="1.3" height="3.6" fill="#fff"/><circle cx="4.75" cy="2.7" r=".7" fill="#fff"/></svg>
<svg style="left:570px;top:93.8px" width="9" height="9" viewBox="0 0 9 9"><path d="M4.5 1 V5 L1 8 M4.5 5 L8 8" stroke="#4a6a8a" stroke-width=".8" fill="none"/></svg>
<svg style="left:583px;top:93.8px" width="9" height="9" viewBox="0 0 9 9"><path d="M1 2 L4.5 .8 L8 2 L8 6 L4.5 8.5 L1 6z" fill="#cfe3ef" stroke="#333" stroke-width=".6"/><path d="M4.5 3 V8.5" stroke="#333" stroke-width=".5"/></svg>
<svg style="left:596.3px;top:93.8px" width="9" height="9" viewBox="0 0 9 9"><rect x="2.5" y="1" width="5.5" height="5" fill="#ddd" stroke="#222" stroke-width=".6"/><rect x="1" y="3" width="5" height="5" fill="#bbb" stroke="#222" stroke-width=".6"/></svg>
<svg style="left:610.3px;top:93.8px" width="9" height="9" viewBox="0 0 9 9"><ellipse cx="4.5" cy="5" rx="4" ry="2" fill="none" stroke="#222" stroke-width=".7"/><circle cx="4.5" cy="4" r="2" fill="#111"/></svg>
<svg style="left:623.6px;top:93.8px" width="9" height="9" viewBox="0 0 9 9"><ellipse cx="4.5" cy="6" rx="4" ry="2" fill="none" stroke="#222" stroke-width=".7"/><path d="M4.5 1 V6" stroke="#222" stroke-width=".7"/><circle cx="4.5" cy="2" r="1" fill="#222"/></svg>
<svg style="left:641.2px;top:93.8px" width="8.5" height="9" viewBox="0 0 8.5 9"><rect x=".5" y="1" width="7.5" height="7" fill="#fff" stroke="#333" stroke-width=".6"/><rect x="4.2" y="1" width="3.8" height="7" fill="#e33"/><rect x="1.5" y="2" width="2" height="5" fill="#6ab"/></svg>
<svg style="left:654.3px;top:93.8px" width="8.5" height="9" viewBox="0 0 8.5 9"><rect x=".5" y="1" width="7.5" height="7" fill="#2c2" stroke="#222" stroke-width=".6"/><path d="M.5 8 L8 1" stroke="#111" stroke-width=".8"/></svg>
<svg style="left:668px;top:93.8px" width="8.5" height="9" viewBox="0 0 8.5 9"><rect x=".5" y="1" width="7.5" height="7" fill="#dde" stroke="#333" stroke-width=".6"/><rect x=".5" y="1" width="7.5" height="2.5" fill="#668"/><path d="M.5 5 H8" stroke="#333" stroke-width=".6"/></svg>
<svg style="left:681.3px;top:93.8px" width="8.5" height="9" viewBox="0 0 8.5 9"><path d="M4.25 .8 L7.8 2.5 L7.8 6.5 L4.25 8.3 L.7 6.5 L.7 2.5z" fill="#9c9" stroke="#444" stroke-width=".6"/><path d="M.7 2.5 L4.25 4.3 L7.8 2.5 M4.25 4.3 V8.3" stroke="#444" stroke-width=".5" fill="none"/><rect x="1.5" y="4" width="2" height="2" fill="#e66"/></svg>
<svg style="left:694.5px;top:93.8px" width="9" height="9" viewBox="0 0 9 9"><path d="M.5 4.5 Q4.5 .5 8.5 4.5 Q4.5 8.5 .5 4.5z" fill="#fff" stroke="#111" stroke-width=".8"/><circle cx="4.5" cy="4.5" r="1.8" fill="#111"/><path d="M1 8 L8 1" stroke="#111" stroke-width=".8"/></svg>
<svg style="left:920.6px;top:94px" width="9.5" height="9.5" viewBox="0 0 9.5 9.5"><circle cx="5" cy="4" r="2.8" fill="#fff" stroke="#2244dd" stroke-width="1"/><path d="M6.8 6 L9 8.8" stroke="#111" stroke-width="1.2"/><path d="M2.5 4 L1 8.5 L3.5 7z" fill="#1133cc"/></svg>
<svg style="left:935px;top:94px" width="9.5" height="9.5" viewBox="0 0 9.5 9.5"><circle cx="4.3" cy="4.3" r="3.6" fill="#fff" stroke="#333" stroke-width=".6"/><path d="M4.3 1.5 V7.1 M1.5 4.3 H7.1 M2.4 2.4 L6.2 6.2 M6.2 2.4 L2.4 6.2" stroke="#1a4fe0" stroke-width="1"/><path d="M7 7 L9 9" stroke="#111" stroke-width="1.1"/></svg>
<svg style="left:949px;top:94px" width="9.5" height="9.5" viewBox="0 0 9.5 9.5"><circle cx="4.3" cy="4.3" r="3.6" fill="#fff" stroke="#333" stroke-width=".7"/><circle cx="4.3" cy="4.3" r="1.6" fill="none" stroke="#3a5ae0" stroke-width=".7"/><path d="M7 7 L9 9" stroke="#111" stroke-width="1.1"/></svg>
<svg style="left:963px;top:94px" width="9.5" height="9.5" viewBox="0 0 9.5 9.5"><path d="M7.5 3 A3.5 3.5 0 1 0 7 7" stroke="#2040e0" stroke-width="1.1" fill="none"/><path d="M6 1 L9 2.5 L6.5 4.5z" fill="#2040e0"/><path d="M5 8.5 L8.5 5" stroke="#c8a020" stroke-width="1.6"/><circle cx="8.2" cy="5.2" r=".8" fill="#e03030"/></svg>
<svg style="left:977px;top:94px" width="9.5" height="9.5" viewBox="0 0 9.5 9.5"><rect x=".5" y="3" width="6" height="6" fill="none" stroke="#6a7ae0" stroke-width=".5"/><circle cx="4.3" cy="4" r="2.6" fill="#fff" stroke="#333" stroke-width=".6"/><path d="M3 4 H5.6" stroke="#3050e0" stroke-width=".7"/><path d="M6.2 6 L8.8 8.6" stroke="#111" stroke-width="1.1"/></svg>
<svg style="left:992px;top:94px" width="9" height="9.5" viewBox="0 0 9 9.5"><path d="M2 5 V2.5 Q2 1.6 2.8 1.6 Q3.5 1.6 3.5 2.5 V1.5 Q3.5 .6 4.3 .6 Q5 .6 5 1.5 V2 Q5 1.2 5.7 1.2 Q6.5 1.2 6.5 2 V3 Q6.5 2.3 7.2 2.3 Q8 2.3 8 3.2 V6 Q8 9 5 9 H4 Q1.5 9 1 6.5z" fill="#fff" stroke="#666" stroke-width=".5"/></svg>
<svg style="left:1005.3px;top:94px" width="9.5" height="9.5" viewBox="0 0 9.5 9.5"><rect x=".5" y=".5" width="8.5" height="8.5" fill="#fff" stroke="#555" stroke-width=".6"/><rect x=".5" y=".5" width="8.5" height="2" fill="#40d0d0"/><path d="M3 4 L7 7.5" stroke="#1a3ae0" stroke-width="1.2"/><path d="M5.5 8 L8 8 L8 5.5z" fill="#1a3ae0"/></svg>
<div class="a" style="left:430.1px;top:240.1px;width:163.3px;height:67.5px;background:#5b5e96;box-shadow:0 0 3px rgba(0,0,0,.25)"></div>
<div class="t c" style="left:498px;top:246.8px;color:#e4e5f0;font-size:6.5px">Rebuild tree</div>
<svg style="left:573.7px;top:246px" width="7" height="7" viewBox="0 0 7 7"><path d="M.4 .4L6.6 6.6M6.6 .4L.4 6.6" stroke="#f0f0f8" stroke-width=".9"/></svg>
<div class="a" style="left:432.7px;top:257px;width:158.1px;height:49px;background:#f0f0f0"></div>
<div class="a" style="left:432.7px;top:283px;width:158.1px;height:23px;background:#e6e6e6;border-top:1px solid #dcdcdc"></div>
<div class="t bl" style="left:438.7px;top:268.1px;">Level</div>
<div class="a" style="left:437px;top:288.3px;width:40px;height:13.4px;background:#e1e1e1;border:1px solid #3b8fd9"></div>
<div class="t bl" style="left:445.5px;top:292.2px;">Accept</div>
<div class="a" style="left:546px;top:288.3px;width:40.5px;height:13.4px;background:#e1e1e1;border:1px solid #adadad"></div>
<div class="a" style="left:457.5px;top:263.2px;width:127.3px;height:14.2px;background:#fff;border:1px solid #3b8fd9"></div>
<div class="a" style="left:575.4px;top:264.2px;width:8.4px;height:12.2px;background:#d6e8f8;border-left:1px solid #7ab3e4"></div>
<svg style="left:577px;top:269px" width="5" height="3" viewBox="0 0 5 3"><path d="M.4 .4 L2.5 2.5 L4.6 .4" stroke="#444" stroke-width=".6" fill="none"/></svg>
<div class="t bl" style="left:460.5px;top:268.1px;color:#111">Show work sections and items</div>
<div class="a" style="left:457.5px;top:277.4px;width:127.3px;height:43.9px;background:#fff;border:1px solid #3b8fd9;border-top:none"></div>
<div class="a" style="left:458.5px;top:300px;width:125.3px;height:10.2px;background:#cde6f7"></div>
<div class="t bl" style="left:460px;top:281.3px;color:#111">Show only the first work section level</div>
<div class="t bl" style="left:460px;top:291.85px;color:#111">Only show work sections</div>
<div class="t bl" style="left:460px;top:302.40000000000003px;color:#111">Show work sections and items</div>
<div class="t bl" style="left:460px;top:312.95px;color:#111">Expand all</div>
<div class="a" id="bl"></div><div class="a" id="br"></div><div class="a" id="bb"></div>
</body></html>
